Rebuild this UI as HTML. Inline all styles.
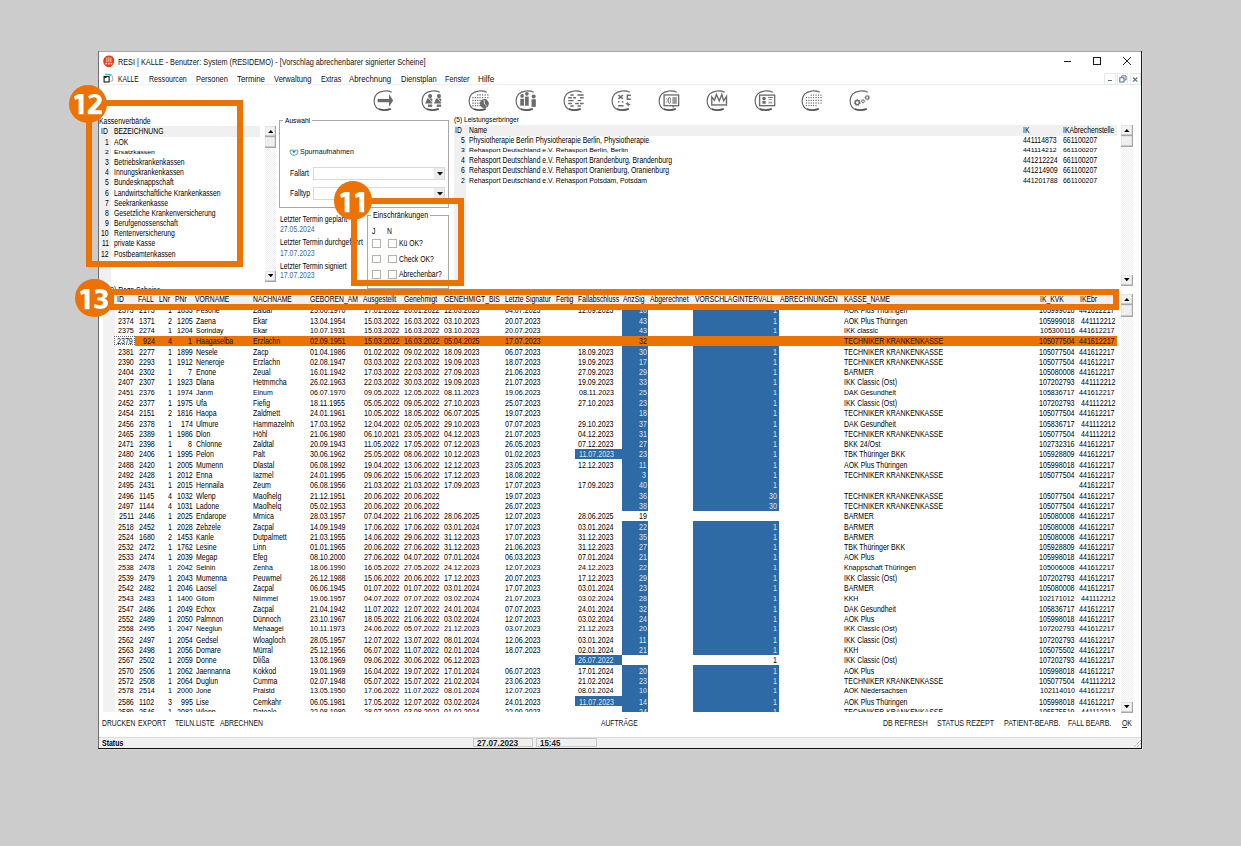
<!DOCTYPE html>
<html><head><meta charset="utf-8"><style>
html,body{margin:0;padding:0;}
body{width:1241px;height:846px;background:#cccccc;position:relative;overflow:hidden;font-family:"Liberation Sans",sans-serif;}
.a{position:absolute;}
.t{position:absolute;white-space:nowrap;transform-origin:0 50%;}
.clip{position:absolute;overflow:hidden;}
</style></head><body>
<div class="a" style="left:98.00px;top:51.00px;width:1044.00px;height:698.00px;background:#fff;"></div>
<div class="a" style="left:98.00px;top:51.00px;width:1044.00px;height:1.00px;background:#a9a7a9;"></div>
<div class="a" style="left:98.00px;top:51.00px;width:1.00px;height:698.00px;background:#6e6d70;"></div>
<div class="a" style="left:1141.00px;top:51.00px;width:1.00px;height:698.00px;background:#1e1e1e;"></div>
<div class="a" style="left:1142.00px;top:52.00px;width:1.00px;height:697.50px;background:#d8d8d8;"></div>
<div class="a" style="left:98.00px;top:747.70px;width:1044.00px;height:1.10px;background:#111;"></div>
<div class="a" style="left:98.00px;top:748.80px;width:1045.00px;height:0.80px;background:#d6d6d6;"></div>
<svg class="a" style="left:103px;top:54.5px" width="11.5" height="12.5" viewBox="0 0 11.5 12.5">
<path d="M5.7 0.4 C7.2 0.3 8.3 0.9 9.4 1.6 C10.6 2.6 11.2 3.9 11.2 5.4 C11.3 6.6 11 7.9 10.4 8.9 C9.6 10.3 8.6 11.4 7.3 12 C6.4 12.4 5.2 12.4 4.2 12 C2.6 11.3 1.4 10.1 0.7 8.6 C0.2 7.5 0.1 6.1 0.4 4.8 C0.8 3.1 1.8 1.7 3.3 0.9 C4 0.6 4.8 0.4 5.7 0.4 Z" fill="#e63f1c"/>
<rect x="3.2" y="2.6" width="1.2" height="4.6" fill="#f6b8a4"/><rect x="5.2" y="2.2" width="1.2" height="5" fill="#f6b8a4"/><rect x="7.2" y="2.6" width="1.2" height="4.6" fill="#f6b8a4"/>
<rect x="2.4" y="7.9" width="1.6" height="1.4" fill="#fff"/><rect x="4.9" y="8.1" width="1.8" height="1.2" fill="#fff"/><rect x="7.6" y="7.9" width="1.6" height="1.4" fill="#fff"/>
</svg>
<div class="t" style="left:117.60px;top:57.05px;font-size:9.5px;line-height:9.5px;transform:scaleX(0.7666);color:#111;">RESI | KALLE - Benutzer: System (RESIDEMO) - [Vorschlag abrechenbarer signierter Scheine]</div>
<div class="a" style="left:1064.00px;top:61.00px;width:7.00px;height:1.00px;background:#222;"></div>
<div class="a" style="left:1093.00px;top:57.00px;width:7.50px;height:8.00px;box-shadow:inset 0 0 0 1.05px #1a1a1a;"></div>
<svg class="a" style="left:1122px;top:56px" width="10" height="10" viewBox="0 0 10 10"><path d="M1 1 L9 9 M9 1 L1 9" stroke="#222" stroke-width="0.95"/></svg>
<svg class="a" style="left:102.5px;top:73px" width="11" height="10" viewBox="0 0 11 10">
<rect x="1.1" y="3.4" width="5" height="5.6" fill="none" stroke="#1a1a1a" stroke-width="1.1"/>
<path d="M1.1 4.6 H3.2 L3.8 3.6" stroke="#1a1a1a" stroke-width="1" fill="none"/>
<path d="M2.3 1.1 L8.6 1.8" stroke="#35b0d8" stroke-width="1.1"/>
<path d="M6.3 2.6 L9.4 2.9 L9.9 7.9 L6.3 8.4" stroke="#9a9a9a" stroke-width="0.8" fill="none"/>
</svg>
<div class="t" style="left:118.00px;top:74.20px;font-size:9.8px;line-height:9.8px;transform:scaleX(0.6817);color:#111;">KALLE</div>
<div class="t" style="left:148.60px;top:74.20px;font-size:9.8px;line-height:9.8px;transform:scaleX(0.7228);color:#111;">Ressourcen</div>
<div class="t" style="left:195.80px;top:74.20px;font-size:9.8px;line-height:9.8px;transform:scaleX(0.7580);color:#111;">Personen</div>
<div class="t" style="left:236.60px;top:74.20px;font-size:9.8px;line-height:9.8px;transform:scaleX(0.8033);color:#111;">Termine</div>
<div class="t" style="left:273.50px;top:74.20px;font-size:9.8px;line-height:9.8px;transform:scaleX(0.7734);color:#111;">Verwaltung</div>
<div class="t" style="left:320.60px;top:74.20px;font-size:9.8px;line-height:9.8px;transform:scaleX(0.7273);color:#111;">Extras</div>
<div class="t" style="left:349.20px;top:74.20px;font-size:9.8px;line-height:9.8px;transform:scaleX(0.7984);color:#111;">Abrechnung</div>
<div class="t" style="left:400.80px;top:74.20px;font-size:9.8px;line-height:9.8px;transform:scaleX(0.7688);color:#111;">Dienstplan</div>
<div class="t" style="left:445.40px;top:74.20px;font-size:9.8px;line-height:9.8px;transform:scaleX(0.7344);color:#111;">Fenster</div>
<div class="t" style="left:478.40px;top:74.20px;font-size:9.8px;line-height:9.8px;transform:scaleX(0.8314);color:#111;">Hilfe</div>
<div class="a" style="left:99.00px;top:83.50px;width:1042.00px;height:1.00px;background:#eeeeee;"></div>
<div class="a" style="left:1104.00px;top:73.00px;width:11.50px;height:12.00px;box-shadow:inset 0 0 0 1px #e8e8e8;"></div>
<div class="a" style="left:1117.00px;top:73.00px;width:11.00px;height:12.00px;box-shadow:inset 0 0 0 1px #e8e8e8;"></div>
<div class="a" style="left:1129.50px;top:73.00px;width:11.00px;height:12.00px;box-shadow:inset 0 0 0 1px #e8e8e8;"></div>
<div class="a" style="left:1107.50px;top:79.80px;width:4.00px;height:1.40px;background:#4f6d8c;"></div>
<svg class="a" style="left:1119px;top:75px" width="8" height="8" viewBox="0 0 8 8"><rect x="0.8" y="2.8" width="4.2" height="4.2" fill="none" stroke="#56728f" stroke-width="1"/><path d="M2.8 2.8 V0.8 H7 V5 H5" fill="none" stroke="#56728f" stroke-width="1"/></svg>
<svg class="a" style="left:1131px;top:75px" width="8" height="8" viewBox="0 0 8 8"><path d="M2 2.5 L6.3 6.6 M6.3 2.5 L2 6.6" stroke="#5a7590" stroke-width="1.3"/></svg>
<svg class="a" style="left:370px;top:86.5px" width="28" height="28" viewBox="0 0 846 846"><path d="M655 160 C570 110 480 118 410 122 C230 135 122 260 125 415 C128 560 205 655 300 680" fill="none" stroke="#666" stroke-width="36"/><path d="M268 666 Q445 730 628 662" fill="none" stroke="#555" stroke-width="56"/><rect x="230" y="360" width="350" height="100" fill="#6b6b6b"/><path d="M575 210 L700 410 L575 600 Z" fill="#6b6b6b"/></svg>
<svg class="a" style="left:418px;top:86.5px" width="28" height="28" viewBox="0 0 846 846"><path d="M655 160 C570 110 480 118 410 122 C230 135 122 260 125 415 C128 560 205 655 300 680" fill="none" stroke="#666" stroke-width="36"/><path d="M268 666 Q445 730 628 662" fill="none" stroke="#555" stroke-width="56"/><circle cx="365" cy="275" r="62" fill="#6b6b6b"/><path d="M280 350 H430 V500 H215 Z" fill="#6b6b6b"/><path d="M335 350 L430 470" stroke="#fff" stroke-width="22"/><rect x="300" y="530" width="130" height="70" fill="#6b6b6b"/><circle cx="633" cy="275" r="62" fill="#6b6b6b"/><path d="M548 350 H698 V500 H483 Z" fill="#6b6b6b"/><path d="M603 350 L698 470" stroke="#fff" stroke-width="22"/><rect x="568" y="530" width="130" height="70" fill="#6b6b6b"/></svg>
<svg class="a" style="left:465px;top:86.5px" width="28" height="28" viewBox="0 0 846 846"><path d="M655 160 C570 110 480 118 410 122 C230 135 122 260 125 415 C128 560 205 655 300 680" fill="none" stroke="#666" stroke-width="36"/><path d="M268 666 Q445 730 628 662" fill="none" stroke="#555" stroke-width="56"/><rect x="366.0" y="221.0" width="38" height="38" fill="#707070"/><rect x="436.0" y="221.0" width="38" height="38" fill="#707070"/><rect x="511.0" y="221.0" width="38" height="38" fill="#707070"/><rect x="591.0" y="221.0" width="38" height="38" fill="#707070"/><rect x="671.0" y="221.0" width="38" height="38" fill="#707070"/><rect x="221.0" y="301.0" width="38" height="38" fill="#707070"/><rect x="296.0" y="301.0" width="38" height="38" fill="#707070"/><rect x="366.0" y="301.0" width="38" height="38" fill="#707070"/><rect x="436.0" y="301.0" width="38" height="38" fill="#707070"/><rect x="511.0" y="301.0" width="38" height="38" fill="#707070"/><rect x="591.0" y="301.0" width="38" height="38" fill="#707070"/><rect x="671.0" y="301.0" width="38" height="38" fill="#707070"/><rect x="221.0" y="386.0" width="38" height="38" fill="#707070"/><rect x="296.0" y="386.0" width="38" height="38" fill="#707070"/><rect x="366.0" y="386.0" width="38" height="38" fill="#707070"/><rect x="436.0" y="386.0" width="38" height="38" fill="#707070"/><rect x="221.0" y="471.0" width="38" height="38" fill="#707070"/><rect x="296.0" y="471.0" width="38" height="38" fill="#707070"/><rect x="366.0" y="471.0" width="38" height="38" fill="#707070"/><rect x="436.0" y="471.0" width="38" height="38" fill="#707070"/><rect x="221.0" y="546.0" width="38" height="38" fill="#707070"/><rect x="296.0" y="546.0" width="38" height="38" fill="#707070"/><rect x="366.0" y="546.0" width="38" height="38" fill="#707070"/><rect x="436.0" y="546.0" width="38" height="38" fill="#707070"/><circle cx="585" cy="500" r="135" fill="#6b6b6b"/><path d="M572 395 L590 515 L655 575" stroke="#fff" stroke-width="26" fill="none"/></svg>
<svg class="a" style="left:512px;top:86.5px" width="28" height="28" viewBox="0 0 846 846"><path d="M655 160 C570 110 480 118 410 122 C230 135 122 260 125 415 C128 560 205 655 300 680" fill="none" stroke="#666" stroke-width="36"/><path d="M268 666 Q445 730 628 662" fill="none" stroke="#555" stroke-width="56"/><circle cx="305" cy="270" r="56" fill="#6b6b6b"/><rect x="250" y="355" width="110" height="210" fill="#6b6b6b"/><circle cx="450" cy="205" r="56" fill="#6b6b6b"/><rect x="395" y="290" width="110" height="275" fill="#6b6b6b"/><circle cx="655" cy="285" r="60" fill="#6b6b6b"/><rect x="590" y="370" width="130" height="230" fill="#6b6b6b"/></svg>
<svg class="a" style="left:560px;top:86.5px" width="28" height="28" viewBox="0 0 846 846"><path d="M655 160 C570 110 480 118 410 122 C230 135 122 260 125 415 C128 560 205 655 300 680" fill="none" stroke="#666" stroke-width="36"/><path d="M268 666 Q445 730 628 662" fill="none" stroke="#555" stroke-width="56"/><rect x="310" y="222.5" width="105" height="45" rx="12" fill="#6b6b6b"/><rect x="525" y="222.5" width="190" height="45" rx="12" fill="#6b6b6b"/><rect x="245" y="300.0" width="115" height="50" rx="12" fill="#6b6b6b"/><rect x="395" y="300.0" width="90" height="50" rx="12" fill="#6b6b6b"/><rect x="605" y="300.0" width="110" height="50" rx="12" fill="#6b6b6b"/><rect x="245" y="392.5" width="170" height="35" rx="12" fill="#6b6b6b"/><rect x="525" y="392.5" width="115" height="35" rx="12" fill="#6b6b6b"/><rect x="245" y="472.5" width="115" height="45" rx="12" fill="#6b6b6b"/><rect x="455" y="472.5" width="115" height="45" rx="12" fill="#6b6b6b"/><rect x="605" y="472.5" width="110" height="45" rx="12" fill="#6b6b6b"/><rect x="310" y="555.0" width="105" height="40" rx="12" fill="#6b6b6b"/><rect x="525" y="555.0" width="110" height="40" rx="12" fill="#6b6b6b"/></svg>
<svg class="a" style="left:608px;top:86.5px" width="28" height="28" viewBox="0 0 846 846"><path d="M655 160 C570 110 480 118 410 122 C230 135 122 260 125 415 C128 560 205 655 300 680" fill="none" stroke="#666" stroke-width="36"/><path d="M268 666 Q445 730 628 662" fill="none" stroke="#555" stroke-width="56"/><path d="M315 240 L450 360 M450 240 L315 360" stroke="#6b6b6b" stroke-width="45"/><path d="M690 250 H585 V370 H690" stroke="#6b6b6b" stroke-width="45" fill="none"/><rect x="300" y="425" width="45" height="45" fill="#6b6b6b"/><rect x="420" y="425" width="45" height="45" fill="#6b6b6b"/><rect x="305" y="545" width="165" height="45" fill="#6b6b6b"/><path d="M585 430 L618 492 L690 525 L628 548 L612 600 L588 548 L525 500 L582 478 Z" fill="#6b6b6b"/></svg>
<svg class="a" style="left:655px;top:86.5px" width="28" height="28" viewBox="0 0 846 846"><path d="M655 160 C570 110 480 118 410 122 C230 135 122 260 125 415 C128 560 205 655 300 680" fill="none" stroke="#666" stroke-width="36"/><path d="M268 666 Q445 730 628 662" fill="none" stroke="#555" stroke-width="56"/><rect x="275" y="240" width="440" height="325" fill="none" stroke="#6b6b6b" stroke-width="40"/><path d="M515 560 L540 635 L600 560 Z" fill="#6b6b6b"/><ellipse cx="435" cy="405" rx="32" ry="98" fill="none" stroke="#6b6b6b" stroke-width="26"/><path d="M340 335 L385 405 L340 475" stroke="#888" stroke-width="24" fill="none"/><rect x="525" y="305" width="135" height="205" fill="#9a9a9a"/></svg>
<svg class="a" style="left:703px;top:86.5px" width="28" height="28" viewBox="0 0 846 846"><path d="M655 160 C570 110 480 118 410 122 C230 135 122 260 125 415 C128 560 205 655 300 680" fill="none" stroke="#666" stroke-width="36"/><path d="M268 666 Q445 730 628 662" fill="none" stroke="#555" stroke-width="56"/><path d="M265 545 L265 300 L345 400 L405 225 L490 420 L570 225 L625 420 L710 285 L710 545 Z" stroke="#6b6b6b" stroke-width="42" fill="none" stroke-linejoin="miter"/><rect x="250" y="560" width="460" height="18" fill="#bbb"/></svg>
<svg class="a" style="left:751px;top:86.5px" width="28" height="28" viewBox="0 0 846 846"><path d="M655 160 C570 110 480 118 410 122 C230 135 122 260 125 415 C128 560 205 655 300 680" fill="none" stroke="#666" stroke-width="36"/><path d="M268 666 Q445 730 628 662" fill="none" stroke="#555" stroke-width="56"/><rect x="260" y="245" width="455" height="320" fill="none" stroke="#6b6b6b" stroke-width="40"/><circle cx="395" cy="350" r="55" fill="#6b6b6b"/><rect x="345" y="425" width="100" height="80" fill="#6b6b6b"/><rect x="515" y="300" width="145" height="30" fill="#6b6b6b"/><rect x="525" y="365" width="120" height="30" fill="#999"/><rect x="525" y="445" width="120" height="35" fill="#999"/><rect x="520" y="495" width="135" height="20" fill="#bbb"/></svg>
<svg class="a" style="left:798px;top:86.5px" width="28" height="28" viewBox="0 0 846 846"><path d="M655 160 C570 110 480 118 410 122 C230 135 122 260 125 415 C128 560 205 655 300 680" fill="none" stroke="#666" stroke-width="36"/><path d="M268 666 Q445 730 628 662" fill="none" stroke="#555" stroke-width="56"/><rect x="382.0" y="227.0" width="36" height="36" fill="#6e6e6e"/><rect x="452.0" y="227.0" width="36" height="36" fill="#6e6e6e"/><rect x="527.0" y="227.0" width="36" height="36" fill="#6e6e6e"/><rect x="602.0" y="227.0" width="36" height="36" fill="#6e6e6e"/><rect x="677.0" y="227.0" width="36" height="36" fill="#6e6e6e"/><rect x="237.0" y="302.0" width="36" height="36" fill="#6e6e6e"/><rect x="312.0" y="302.0" width="36" height="36" fill="#6e6e6e"/><rect x="382.0" y="302.0" width="36" height="36" fill="#6e6e6e"/><rect x="452.0" y="302.0" width="36" height="36" fill="#6e6e6e"/><rect x="527.0" y="302.0" width="36" height="36" fill="#6e6e6e"/><rect x="602.0" y="302.0" width="36" height="36" fill="#6e6e6e"/><rect x="677.0" y="302.0" width="36" height="36" fill="#6e6e6e"/><rect x="237.0" y="387.0" width="36" height="36" fill="#6e6e6e"/><rect x="312.0" y="387.0" width="36" height="36" fill="#6e6e6e"/><rect x="382.0" y="387.0" width="36" height="36" fill="#6e6e6e"/><rect x="452.0" y="387.0" width="36" height="36" fill="#6e6e6e"/><rect x="527.0" y="387.0" width="36" height="36" fill="#6e6e6e"/><rect x="602.0" y="387.0" width="36" height="36" fill="#6e6e6e"/><rect x="677.0" y="387.0" width="36" height="36" fill="#6e6e6e"/><rect x="237.0" y="467.0" width="36" height="36" fill="#6e6e6e"/><rect x="312.0" y="467.0" width="36" height="36" fill="#6e6e6e"/><rect x="382.0" y="467.0" width="36" height="36" fill="#6e6e6e"/><rect x="452.0" y="467.0" width="36" height="36" fill="#6e6e6e"/><rect x="527.0" y="467.0" width="36" height="36" fill="#6e6e6e"/><rect x="602.0" y="467.0" width="36" height="36" fill="#6e6e6e"/><rect x="677.0" y="467.0" width="36" height="36" fill="#6e6e6e"/><rect x="237.0" y="542.0" width="36" height="36" fill="#6e6e6e"/><rect x="312.0" y="542.0" width="36" height="36" fill="#6e6e6e"/><rect x="382.0" y="542.0" width="36" height="36" fill="#6e6e6e"/><rect x="452.0" y="542.0" width="36" height="36" fill="#6e6e6e"/><rect x="527.0" y="542.0" width="36" height="36" fill="#6e6e6e"/></svg>
<svg class="a" style="left:846px;top:86.5px" width="28" height="28" viewBox="0 0 846 846"><path d="M655 160 C570 110 480 118 410 122 C230 135 122 260 125 415 C128 560 205 655 300 680" fill="none" stroke="#666" stroke-width="36"/><path d="M268 666 Q445 730 628 662" fill="none" stroke="#555" stroke-width="56"/><circle cx="340" cy="470" r="62.0" fill="none" stroke="#6b6b6b" stroke-width="42.0"/><circle cx="340" cy="470" r="92.0" fill="none" stroke="#6b6b6b" stroke-width="30.0" stroke-dasharray="42.0 38.0"/><circle cx="515" cy="430" r="38.44" fill="none" stroke="#6b6b6b" stroke-width="26.04"/><circle cx="515" cy="430" r="57.04" fill="none" stroke="#6b6b6b" stroke-width="18.599999999999998" stroke-dasharray="26.04 23.56"/><circle cx="640" cy="320" r="48.36" fill="none" stroke="#6b6b6b" stroke-width="32.76"/><circle cx="640" cy="320" r="71.76" fill="none" stroke="#6b6b6b" stroke-width="23.4" stroke-dasharray="32.76 29.64"/></svg>
<div class="t" style="left:99.20px;top:117.05px;font-size:8.3px;line-height:8.3px;transform:scaleX(0.8300);">Kassenverbände</div>
<div class="a" style="left:99.00px;top:126.00px;width:161.00px;height:11.00px;background:#f0f0f0;"></div>
<div class="a" style="left:99.00px;top:137.00px;width:12.00px;height:144.50px;background:#f0f0f0;"></div>
<div class="t" style="left:100.80px;top:127.70px;font-size:8.2px;line-height:8.2px;transform:scaleX(0.8300);">ID</div>
<div class="t" style="left:113.70px;top:127.70px;font-size:8.2px;line-height:8.2px;transform:scaleX(0.8300);">BEZEICHNUNG</div>
<div class="t" style="left:105.01px;top:138.80px;font-size:8.2px;line-height:8.2px;transform:scaleX(0.8300);">1</div>
<div class="t" style="left:113.50px;top:138.80px;font-size:8.2px;line-height:8.2px;transform:scaleX(0.8300);">AOK</div>
<div class="t" style="left:105.01px;top:148.96px;font-size:8.2px;line-height:8.2px;transform:scale(0.8300,0.6);">2</div>
<div class="t" style="left:113.50px;top:148.96px;font-size:8.2px;line-height:8.2px;transform:scale(0.8300,0.6);">Ersatzkassen</div>
<div class="t" style="left:105.01px;top:159.12px;font-size:8.2px;line-height:8.2px;transform:scaleX(0.8300);">3</div>
<div class="t" style="left:113.50px;top:159.12px;font-size:8.2px;line-height:8.2px;transform:scaleX(0.8300);">Betriebskrankenkassen</div>
<div class="t" style="left:105.01px;top:169.28px;font-size:8.2px;line-height:8.2px;transform:scaleX(0.8300);">4</div>
<div class="t" style="left:113.50px;top:169.28px;font-size:8.2px;line-height:8.2px;transform:scaleX(0.8300);">Innungskrankenkassen</div>
<div class="t" style="left:105.01px;top:179.44px;font-size:8.2px;line-height:8.2px;transform:scaleX(0.8300);">5</div>
<div class="t" style="left:113.50px;top:179.44px;font-size:8.2px;line-height:8.2px;transform:scaleX(0.8300);">Bundesknappschaft</div>
<div class="t" style="left:105.01px;top:189.60px;font-size:8.2px;line-height:8.2px;transform:scaleX(0.8300);">6</div>
<div class="t" style="left:113.50px;top:189.60px;font-size:8.2px;line-height:8.2px;transform:scaleX(0.8300);">Landwirtschaftliche Krankenkassen</div>
<div class="t" style="left:105.01px;top:199.76px;font-size:8.2px;line-height:8.2px;transform:scaleX(0.8300);">7</div>
<div class="t" style="left:113.50px;top:199.76px;font-size:8.2px;line-height:8.2px;transform:scaleX(0.8300);">Seekrankenkasse</div>
<div class="t" style="left:105.01px;top:209.92px;font-size:8.2px;line-height:8.2px;transform:scaleX(0.8300);">8</div>
<div class="t" style="left:113.50px;top:209.92px;font-size:8.2px;line-height:8.2px;transform:scaleX(0.8300);">Gesetzliche Krankenversicherung</div>
<div class="t" style="left:105.01px;top:220.08px;font-size:8.2px;line-height:8.2px;transform:scaleX(0.8300);">9</div>
<div class="t" style="left:113.50px;top:220.08px;font-size:8.2px;line-height:8.2px;transform:scaleX(0.8300);">Berufgenossenschaft</div>
<div class="t" style="left:101.23px;top:230.24px;font-size:8.2px;line-height:8.2px;transform:scaleX(0.8300);">10</div>
<div class="t" style="left:113.50px;top:230.24px;font-size:8.2px;line-height:8.2px;transform:scaleX(0.8300);">Rentenversicherung</div>
<div class="t" style="left:101.73px;top:240.40px;font-size:8.2px;line-height:8.2px;transform:scaleX(0.8300);">11</div>
<div class="t" style="left:113.50px;top:240.40px;font-size:8.2px;line-height:8.2px;transform:scaleX(0.8300);">private Kasse</div>
<div class="t" style="left:101.23px;top:250.56px;font-size:8.2px;line-height:8.2px;transform:scaleX(0.8300);">12</div>
<div class="t" style="left:113.50px;top:250.56px;font-size:8.2px;line-height:8.2px;transform:scaleX(0.8300);">Postbeamtenkassen</div>
<div class="a" style="left:265.00px;top:126.00px;width:11.00px;height:155.50px;background:repeating-conic-gradient(#f0f0f0 0 25%,#fdfdfd 0 50%) 0 0/2px 2px;"></div>
<div class="a" style="left:265.00px;top:126.00px;width:11.00px;height:11.00px;background:#f1f1f1;box-shadow:inset -1.2px -1.6px 0 #a6a6a6, inset 1px 1px 0 #e4e4e4;"></div>
<svg class="a" style="left:267.5px;top:129.6px" width="5.6" height="3.2" viewBox="0 0 5.6 3.2"><path d="M0 3.2 L2.8 0 L5.6 3.2 Z" fill="#000"/></svg>
<div class="a" style="left:265.00px;top:137.00px;width:11.00px;height:11.00px;background:#efefef;box-shadow:inset -1.2px -1.6px 0 #a6a6a6, inset 1px 1px 0 #e4e4e4;"></div>
<div class="a" style="left:265.00px;top:270.50px;width:11.00px;height:11.00px;background:#f1f1f1;box-shadow:inset -1.2px -1.6px 0 #a6a6a6, inset 1px 1px 0 #e4e4e4;"></div>
<svg class="a" style="left:267.5px;top:274.3px" width="5.6" height="3.2" viewBox="0 0 5.6 3.2"><path d="M0 0 L2.8 3.2 L5.6 0 Z" fill="#000"/></svg>
<div class="a" style="left:279.00px;top:120.00px;width:170.00px;height:88.00px;box-shadow:inset 0 0 0 1px #a8a8a8;"></div>
<div class="a" style="left:283.00px;top:117.00px;width:29.10px;height:6.00px;background:#fff;"></div>
<div class="t" style="left:285.00px;top:116.60px;font-size:8px;line-height:8px;transform:scaleX(0.8300);">Auswahl</div>
<svg class="a" style="left:288.5px;top:148.5px" width="10" height="7" viewBox="0 0 10 7"><path d="M1 1.2 Q1 6.3 5 6.3 Q9 6.3 9 1.2 Z" fill="#eef6fb" stroke="#5f9fcc" stroke-width="1"/><path d="M3.3 2 L6.7 2 L5 4.3 Z" fill="#1f9a3a"/></svg>
<div class="t" style="left:300.40px;top:147.70px;font-size:8.2px;line-height:8.2px;transform:scaleX(0.8150);color:#111;transform:scale(0.8583,0.8);">Spurnaufnahmen</div>
<div class="t" style="left:290.00px;top:170.20px;font-size:8.2px;line-height:8.2px;transform:scaleX(0.8300);">Fallart</div>
<div class="t" style="left:290.00px;top:190.30px;font-size:8.2px;line-height:8.2px;transform:scaleX(0.8300);">Falltyp</div>
<div class="a" style="left:313.00px;top:166.50px;width:132.00px;height:13.20px;box-shadow:inset 0 0 0 1px #d9d9d9;"></div>
<div class="a" style="left:434.00px;top:167.50px;width:10.00px;height:11.20px;background:#ececec;"></div>
<svg class="a" style="left:436.5px;top:171.6px" width="6" height="4" viewBox="0 0 6 4"><path d="M0 0 L3 3.5 L6 0 Z" fill="#111"/></svg>
<div class="a" style="left:313.00px;top:187.40px;width:132.00px;height:12.90px;box-shadow:inset 0 0 0 1px #d9d9d9;"></div>
<div class="a" style="left:434.00px;top:188.40px;width:10.00px;height:10.90px;background:#ececec;"></div>
<svg class="a" style="left:436.5px;top:192.4px" width="6" height="4" viewBox="0 0 6 4"><path d="M0 0 L3 3.5 L6 0 Z" fill="#111"/></svg>
<div class="t" style="left:280.00px;top:215.90px;font-size:8.2px;line-height:8.2px;transform:scaleX(0.8300);">Letzter Termin geplant</div>
<div class="t" style="left:280.00px;top:239.20px;font-size:8.2px;line-height:8.2px;transform:scaleX(0.8300);">Letzter Termin durchgeführt</div>
<div class="t" style="left:280.00px;top:262.50px;font-size:8.2px;line-height:8.2px;transform:scaleX(0.8300);">Letzter Termin signiert</div>
<div class="t" style="left:280.00px;top:226.30px;font-size:8.2px;line-height:8.2px;transform:scaleX(0.8450);color:#3a6db0;">27.05.2024</div>
<div class="t" style="left:280.00px;top:249.50px;font-size:8.2px;line-height:8.2px;transform:scaleX(0.8450);color:#3a6db0;">17.07.2023</div>
<div class="t" style="left:280.00px;top:272.30px;font-size:8.2px;line-height:8.2px;transform:scaleX(0.8450);color:#3a6db0;">17.07.2023</div>
<div class="a" style="left:367.00px;top:215.00px;width:82.00px;height:74.00px;box-shadow:inset 0 0 0 1px #a8a8a8;"></div>
<div class="a" style="left:370.90px;top:212.00px;width:59.16px;height:6.00px;background:#fff;"></div>
<div class="t" style="left:372.90px;top:211.30px;font-size:8.6px;line-height:8.6px;transform:scaleX(0.8300);">Einschränkungen</div>
<div class="t" style="left:372.40px;top:227.90px;font-size:8.2px;line-height:8.2px;transform:scaleX(0.8300);">J</div>
<div class="t" style="left:387.40px;top:227.90px;font-size:8.2px;line-height:8.2px;transform:scaleX(0.8300);">N</div>
<div class="a" style="left:372.00px;top:239.20px;width:9.00px;height:8.60px;box-shadow:inset 0 0 0 1px #b4b4a8;"></div>
<div class="a" style="left:388.00px;top:239.20px;width:8.50px;height:8.60px;box-shadow:inset 0 0 0 1px #b4b4a8;"></div>
<div class="t" style="left:398.70px;top:240.00px;font-size:8.2px;line-height:8.2px;transform:scaleX(0.8300);">Kü OK?</div>
<div class="a" style="left:372.00px;top:254.90px;width:9.00px;height:8.60px;box-shadow:inset 0 0 0 1px #b4b4a8;"></div>
<div class="a" style="left:388.00px;top:254.90px;width:8.50px;height:8.60px;box-shadow:inset 0 0 0 1px #b4b4a8;"></div>
<div class="t" style="left:398.70px;top:255.70px;font-size:8.2px;line-height:8.2px;transform:scaleX(0.8300);">Check OK?</div>
<div class="a" style="left:372.00px;top:270.20px;width:9.00px;height:8.60px;box-shadow:inset 0 0 0 1px #b4b4a8;"></div>
<div class="a" style="left:388.00px;top:270.20px;width:8.50px;height:8.60px;box-shadow:inset 0 0 0 1px #b4b4a8;"></div>
<div class="t" style="left:398.70px;top:271.00px;font-size:8.2px;line-height:8.2px;transform:scaleX(0.8300);">Abrechenbar?</div>
<div class="t" style="left:454.40px;top:115.80px;font-size:8px;line-height:8px;transform:scaleX(0.8300);">(5) Leistungserbringer</div>
<div class="a" style="left:454.00px;top:125.00px;width:663.00px;height:10.50px;background:#f0f0f0;"></div>
<div class="a" style="left:454.00px;top:135.50px;width:12.00px;height:150.50px;background:#f0f0f0;"></div>
<div class="t" style="left:454.60px;top:126.90px;font-size:8.2px;line-height:8.2px;transform:scaleX(0.8300);">ID</div>
<div class="t" style="left:469.10px;top:126.90px;font-size:8.2px;line-height:8.2px;transform:scaleX(0.8300);">Name</div>
<div class="t" style="left:1022.70px;top:126.90px;font-size:8.2px;line-height:8.2px;transform:scaleX(0.8300);">IK</div>
<div class="t" style="left:1062.70px;top:126.90px;font-size:8.2px;line-height:8.2px;transform:scaleX(0.8300);">IKAbrechenstelle</div>
<div class="t" style="left:461.41px;top:137.30px;font-size:8.2px;line-height:8.2px;transform:scaleX(0.8300);">5</div>
<div class="t" style="left:469.10px;top:137.30px;font-size:8.2px;line-height:8.2px;transform:scaleX(0.8350);">Physiotherapie Berlin Physiotherapie Berlin, Physiotherapie</div>
<div class="t" style="left:1022.70px;top:137.30px;font-size:8.2px;line-height:8.2px;transform:scaleX(0.8450);">441114873</div>
<div class="t" style="left:1062.70px;top:137.30px;font-size:8.2px;line-height:8.2px;transform:scaleX(0.8450);">661100207</div>
<div class="t" style="left:461.41px;top:147.25px;font-size:8.2px;line-height:8.2px;transform:scale(0.8300,0.6);">3</div>
<div class="t" style="left:469.10px;top:147.25px;font-size:8.2px;line-height:8.2px;transform:scale(0.8350,0.6);">Rehasport Deutschland e.V. Rehasport Berlin, Berlin</div>
<div class="t" style="left:1022.70px;top:147.25px;font-size:8.2px;line-height:8.2px;transform:scale(0.8450,0.6);">441114212</div>
<div class="t" style="left:1062.70px;top:147.25px;font-size:8.2px;line-height:8.2px;transform:scale(0.8450,0.6);">661100207</div>
<div class="t" style="left:461.41px;top:157.20px;font-size:8.2px;line-height:8.2px;transform:scaleX(0.8300);">4</div>
<div class="t" style="left:469.10px;top:157.20px;font-size:8.2px;line-height:8.2px;transform:scaleX(0.8350);">Rehasport Deutschland e.V. Rehasport Brandenburg, Brandenburg</div>
<div class="t" style="left:1022.70px;top:157.20px;font-size:8.2px;line-height:8.2px;transform:scaleX(0.8450);">441212224</div>
<div class="t" style="left:1062.70px;top:157.20px;font-size:8.2px;line-height:8.2px;transform:scaleX(0.8450);">661100207</div>
<div class="t" style="left:461.41px;top:167.15px;font-size:8.2px;line-height:8.2px;transform:scaleX(0.8300);">6</div>
<div class="t" style="left:469.10px;top:167.15px;font-size:8.2px;line-height:8.2px;transform:scaleX(0.8350);">Rehasport Deutschland e.V. Rehasport Oranienburg, Oranienburg</div>
<div class="t" style="left:1022.70px;top:167.15px;font-size:8.2px;line-height:8.2px;transform:scaleX(0.8450);">441214909</div>
<div class="t" style="left:1062.70px;top:167.15px;font-size:8.2px;line-height:8.2px;transform:scaleX(0.8450);">661100207</div>
<div class="t" style="left:461.41px;top:177.10px;font-size:8.2px;line-height:8.2px;transform:scale(0.8300,0.85);">2</div>
<div class="t" style="left:469.10px;top:177.10px;font-size:8.2px;line-height:8.2px;transform:scale(0.8350,0.85);">Rehasport Deutschland e.V. Rehasport Potsdam, Potsdam</div>
<div class="t" style="left:1022.70px;top:177.10px;font-size:8.2px;line-height:8.2px;transform:scale(0.8450,0.85);">441201788</div>
<div class="t" style="left:1062.70px;top:177.10px;font-size:8.2px;line-height:8.2px;transform:scale(0.8450,0.85);">661100207</div>
<div class="a" style="left:1121.30px;top:125.00px;width:11.40px;height:160.60px;background:repeating-conic-gradient(#f0f0f0 0 25%,#fdfdfd 0 50%) 0 0/2px 2px;"></div>
<div class="a" style="left:1121.30px;top:125.00px;width:11.40px;height:11.00px;background:#f1f1f1;box-shadow:inset -1.2px -1.6px 0 #a6a6a6, inset 1px 1px 0 #e4e4e4;"></div>
<svg class="a" style="left:1124.0px;top:128.6px" width="5.6" height="3.2" viewBox="0 0 5.6 3.2"><path d="M0 3.2 L2.8 0 L5.6 3.2 Z" fill="#000"/></svg>
<div class="a" style="left:1121.30px;top:136.00px;width:11.40px;height:11.00px;background:#efefef;box-shadow:inset -1.2px -1.6px 0 #a6a6a6, inset 1px 1px 0 #e4e4e4;"></div>
<div class="a" style="left:1121.30px;top:274.60px;width:11.40px;height:11.00px;background:#f1f1f1;box-shadow:inset -1.2px -1.6px 0 #a6a6a6, inset 1px 1px 0 #e4e4e4;"></div>
<svg class="a" style="left:1124.0px;top:278.4px" width="5.6" height="3.2" viewBox="0 0 5.6 3.2"><path d="M0 0 L2.8 3.2 L5.6 0 Z" fill="#000"/></svg>
<div class="t" style="left:108.00px;top:286.50px;font-size:8.2px;line-height:8.2px;transform:scaleX(0.8300);">(9) Rezp.Scheine</div>
<div class="a" style="left:103.30px;top:304.00px;width:11.40px;height:408.00px;background:#f2f2f2;"></div>
<div class="a" style="left:114.00px;top:295.00px;width:1003.00px;height:9.50px;background:#f0f0f0;"></div>
<div class="t" style="left:116.80px;top:296.00px;font-size:8.2px;line-height:8.2px;transform:scaleX(0.8300);">ID</div>
<div class="t" style="left:138.00px;top:296.00px;font-size:8.2px;line-height:8.2px;transform:scaleX(0.8300);">FALL</div>
<div class="t" style="left:158.70px;top:296.00px;font-size:8.2px;line-height:8.2px;transform:scaleX(0.8300);">LNr</div>
<div class="t" style="left:174.80px;top:296.00px;font-size:8.2px;line-height:8.2px;transform:scaleX(0.8300);">PNr</div>
<div class="t" style="left:195.40px;top:296.00px;font-size:8.2px;line-height:8.2px;transform:scaleX(0.8300);">VORNAME</div>
<div class="t" style="left:252.80px;top:296.00px;font-size:8.2px;line-height:8.2px;transform:scaleX(0.8300);">NACHNAME</div>
<div class="t" style="left:310.00px;top:296.00px;font-size:8.2px;line-height:8.2px;transform:scaleX(0.8300);">GEBOREN_AM</div>
<div class="t" style="left:363.20px;top:296.00px;font-size:8.2px;line-height:8.2px;transform:scaleX(0.8300);">Ausgestellt</div>
<div class="t" style="left:403.90px;top:296.00px;font-size:8.2px;line-height:8.2px;transform:scaleX(0.8300);">Genehmigt</div>
<div class="t" style="left:443.80px;top:296.00px;font-size:8.2px;line-height:8.2px;transform:scaleX(0.8300);">GENEHMIGT_BIS</div>
<div class="t" style="left:504.70px;top:296.00px;font-size:8.2px;line-height:8.2px;transform:scaleX(0.8300);">Letzte Signatur</div>
<div class="t" style="left:555.80px;top:296.00px;font-size:8.2px;line-height:8.2px;transform:scaleX(0.8300);">Fertig</div>
<div class="t" style="left:577.70px;top:296.00px;font-size:8.2px;line-height:8.2px;transform:scaleX(0.8300);">Fallabschluss</div>
<div class="t" style="left:623.20px;top:296.00px;font-size:8.2px;line-height:8.2px;transform:scaleX(0.8300);">AnzSig</div>
<div class="t" style="left:650.00px;top:296.00px;font-size:8.2px;line-height:8.2px;transform:scaleX(0.8300);">Abgerechnet</div>
<div class="t" style="left:694.50px;top:296.00px;font-size:8.2px;line-height:8.2px;transform:scaleX(0.8300);">VORSCHLAGINTERVALL</div>
<div class="t" style="left:780.30px;top:296.00px;font-size:8.2px;line-height:8.2px;transform:scaleX(0.8300);">ABRECHNUNGEN</div>
<div class="t" style="left:843.90px;top:296.00px;font-size:8.2px;line-height:8.2px;transform:scaleX(0.8300);">KASSE_NAME</div>
<div class="t" style="left:1040.00px;top:296.00px;font-size:8.2px;line-height:8.2px;transform:scaleX(0.8300);">IK_KVK</div>
<div class="t" style="left:1079.60px;top:296.00px;font-size:8.2px;line-height:8.2px;transform:scaleX(0.8300);">IKEbr</div>
<div class="a" style="left:1121.30px;top:294.40px;width:11.40px;height:418.10px;background:repeating-conic-gradient(#f0f0f0 0 25%,#fdfdfd 0 50%) 0 0/2px 2px;"></div>
<div class="a" style="left:1121.30px;top:294.40px;width:11.40px;height:11.00px;background:#f1f1f1;box-shadow:inset -1.2px -1.6px 0 #a6a6a6, inset 1px 1px 0 #e4e4e4;"></div>
<svg class="a" style="left:1124.0px;top:298.0px" width="5.6" height="3.2" viewBox="0 0 5.6 3.2"><path d="M0 3.2 L2.8 0 L5.6 3.2 Z" fill="#000"/></svg>
<div class="a" style="left:1121.30px;top:305.40px;width:11.40px;height:12.00px;background:#efefef;box-shadow:inset -1.2px -1.6px 0 #a6a6a6, inset 1px 1px 0 #e4e4e4;"></div>
<div class="a" style="left:1121.30px;top:701.50px;width:11.40px;height:11.00px;background:#f1f1f1;box-shadow:inset -1.2px -1.6px 0 #a6a6a6, inset 1px 1px 0 #e4e4e4;"></div>
<svg class="a" style="left:1124.0px;top:705.3px" width="5.6" height="3.2" viewBox="0 0 5.6 3.2"><path d="M0 0 L2.8 3.2 L5.6 0 Z" fill="#000"/></svg>
<div class="clip" style="left:99px;top:304.5px;width:1018px;height:407.5px;">
<div class="a" style="left:522.60px;top:0.55px;width:26.40px;height:10.30px;background:#2e6aa5;"></div>
<div class="a" style="left:593.60px;top:0.55px;width:86.40px;height:10.30px;background:#2e6aa5;"></div>
<div class="t" style="left:19.20px;top:1.90px;font-size:8.8px;line-height:8.8px;transform:scaleX(0.8070);">2373</div>
<div class="t" style="left:39.60px;top:1.90px;font-size:8.8px;line-height:8.8px;transform:scaleX(0.8070);">2173</div>
<div class="t" style="left:69.05px;top:1.90px;font-size:8.8px;line-height:8.8px;transform:scaleX(0.8070);">1</div>
<div class="t" style="left:77.60px;top:1.90px;font-size:8.8px;line-height:8.8px;transform:scaleX(0.8070);">1833</div>
<div class="t" style="left:96.60px;top:1.90px;font-size:8.8px;line-height:8.8px;transform:scaleX(0.7920);">Pesone</div>
<div class="t" style="left:153.80px;top:1.90px;font-size:8.8px;line-height:8.8px;transform:scaleX(0.7920);">Zaldar</div>
<div class="t" style="left:211.00px;top:1.90px;font-size:8.8px;line-height:8.8px;transform:scaleX(0.8070);">25.06.1970</div>
<div class="t" style="left:264.60px;top:1.90px;font-size:8.8px;line-height:8.8px;transform:scaleX(0.8070);">17.01.2022</div>
<div class="t" style="left:304.90px;top:1.90px;font-size:8.8px;line-height:8.8px;transform:scaleX(0.8070);">20.01.2022</div>
<div class="t" style="left:344.80px;top:1.90px;font-size:8.8px;line-height:8.8px;transform:scaleX(0.8070);">12.03.2023</div>
<div class="t" style="left:405.70px;top:1.90px;font-size:8.8px;line-height:8.8px;transform:scaleX(0.8070);">04.07.2023</div>
<div class="t" style="left:479.46px;top:1.90px;font-size:8.8px;line-height:8.8px;transform:scaleX(0.8070);">12.09.2023</div>
<div class="t" style="left:539.50px;top:1.90px;font-size:8.8px;line-height:8.8px;transform:scaleX(0.8070);color:#dde6f1;">18</div>
<div class="t" style="left:673.65px;top:1.90px;font-size:8.8px;line-height:8.8px;transform:scaleX(0.8070);color:#dde6f1;">1</div>
<div class="t" style="left:744.80px;top:1.90px;font-size:8.8px;line-height:8.8px;transform:scaleX(0.7920);">AOK Plus Thüringen</div>
<div class="t" style="left:940.45px;top:1.90px;font-size:8.8px;line-height:8.8px;transform:scaleX(0.8070);">105999018</div>
<div class="t" style="left:980.45px;top:1.90px;font-size:8.8px;line-height:8.8px;transform:scaleX(0.8070);">441612217</div>
<div class="a" style="left:522.60px;top:10.84px;width:26.40px;height:10.30px;background:#2e6aa5;"></div>
<div class="a" style="left:593.60px;top:10.84px;width:86.40px;height:10.30px;background:#2e6aa5;"></div>
<div class="t" style="left:19.20px;top:12.19px;font-size:8.8px;line-height:8.8px;transform:scaleX(0.8070);">2374</div>
<div class="t" style="left:39.60px;top:12.19px;font-size:8.8px;line-height:8.8px;transform:scaleX(0.8070);">1371</div>
<div class="t" style="left:69.05px;top:12.19px;font-size:8.8px;line-height:8.8px;transform:scaleX(0.8070);">2</div>
<div class="t" style="left:77.60px;top:12.19px;font-size:8.8px;line-height:8.8px;transform:scaleX(0.8070);">1205</div>
<div class="t" style="left:96.60px;top:12.19px;font-size:8.8px;line-height:8.8px;transform:scaleX(0.7920);">Zaena</div>
<div class="t" style="left:153.80px;top:12.19px;font-size:8.8px;line-height:8.8px;transform:scaleX(0.7920);">Ekar</div>
<div class="t" style="left:211.00px;top:12.19px;font-size:8.8px;line-height:8.8px;transform:scaleX(0.8070);">13.04.1954</div>
<div class="t" style="left:264.60px;top:12.19px;font-size:8.8px;line-height:8.8px;transform:scaleX(0.8070);">15.03.2022</div>
<div class="t" style="left:304.90px;top:12.19px;font-size:8.8px;line-height:8.8px;transform:scaleX(0.8070);">16.03.2022</div>
<div class="t" style="left:344.80px;top:12.19px;font-size:8.8px;line-height:8.8px;transform:scaleX(0.8070);">03.10.2023</div>
<div class="t" style="left:405.70px;top:12.19px;font-size:8.8px;line-height:8.8px;transform:scaleX(0.8070);">20.07.2023</div>
<div class="t" style="left:539.50px;top:12.19px;font-size:8.8px;line-height:8.8px;transform:scaleX(0.8070);color:#dde6f1;">43</div>
<div class="t" style="left:673.65px;top:12.19px;font-size:8.8px;line-height:8.8px;transform:scaleX(0.8070);color:#dde6f1;">1</div>
<div class="t" style="left:744.80px;top:12.19px;font-size:8.8px;line-height:8.8px;transform:scaleX(0.7920);">AOK Plus Thüringen</div>
<div class="t" style="left:940.45px;top:12.19px;font-size:8.8px;line-height:8.8px;transform:scaleX(0.8070);">105999018</div>
<div class="t" style="left:981.51px;top:12.19px;font-size:8.8px;line-height:8.8px;transform:scaleX(0.8070);">441112212</div>
<div class="a" style="left:522.60px;top:21.13px;width:26.40px;height:10.30px;background:#2e6aa5;"></div>
<div class="a" style="left:593.60px;top:21.13px;width:86.40px;height:10.30px;background:#2e6aa5;"></div>
<div class="t" style="left:19.20px;top:22.48px;font-size:8.8px;line-height:8.8px;transform:scale(0.8070,0.8);">2375</div>
<div class="t" style="left:39.60px;top:22.48px;font-size:8.8px;line-height:8.8px;transform:scale(0.8070,0.8);">2274</div>
<div class="t" style="left:69.05px;top:22.48px;font-size:8.8px;line-height:8.8px;transform:scale(0.8070,0.8);">1</div>
<div class="t" style="left:77.60px;top:22.48px;font-size:8.8px;line-height:8.8px;transform:scale(0.8070,0.8);">1204</div>
<div class="t" style="left:96.60px;top:22.48px;font-size:8.8px;line-height:8.8px;transform:scale(0.7920,0.8);">Sorinday</div>
<div class="t" style="left:153.80px;top:22.48px;font-size:8.8px;line-height:8.8px;transform:scale(0.7920,0.8);">Ekar</div>
<div class="t" style="left:211.00px;top:22.48px;font-size:8.8px;line-height:8.8px;transform:scale(0.8070,0.8);">10.07.1931</div>
<div class="t" style="left:264.60px;top:22.48px;font-size:8.8px;line-height:8.8px;transform:scale(0.8070,0.8);">15.03.2022</div>
<div class="t" style="left:304.90px;top:22.48px;font-size:8.8px;line-height:8.8px;transform:scale(0.8070,0.8);">16.03.2022</div>
<div class="t" style="left:344.80px;top:22.48px;font-size:8.8px;line-height:8.8px;transform:scale(0.8070,0.8);">03.10.2023</div>
<div class="t" style="left:405.70px;top:22.48px;font-size:8.8px;line-height:8.8px;transform:scale(0.8070,0.8);">20.07.2023</div>
<div class="t" style="left:539.50px;top:22.48px;font-size:8.8px;line-height:8.8px;transform:scale(0.8070,0.8);color:#dde6f1;">43</div>
<div class="t" style="left:673.65px;top:22.48px;font-size:8.8px;line-height:8.8px;transform:scale(0.8070,0.8);color:#dde6f1;">1</div>
<div class="t" style="left:744.80px;top:22.48px;font-size:8.8px;line-height:8.8px;transform:scale(0.7920,0.8);">IKK classic</div>
<div class="t" style="left:940.98px;top:22.48px;font-size:8.8px;line-height:8.8px;transform:scale(0.8070,0.8);">105300116</div>
<div class="t" style="left:980.45px;top:22.48px;font-size:8.8px;line-height:8.8px;transform:scale(0.8070,0.8);">441612217</div>
<div class="a" style="left:35.90px;top:31.43px;width:982.10px;height:10.30px;background:#ec7203;"></div>
<div class="a" style="left:15.00px;top:31.03px;width:21.00px;height:9.80px;border:1px dotted #666;box-sizing:border-box;"></div>
<div class="t" style="left:18.00px;top:32.78px;font-size:8.8px;line-height:8.8px;transform:scaleX(0.8070);color:#1a1208;">2379</div>
<div class="t" style="left:43.55px;top:32.78px;font-size:8.8px;line-height:8.8px;transform:scaleX(0.8070);color:#1a1208;">924</div>
<div class="t" style="left:69.05px;top:32.78px;font-size:8.8px;line-height:8.8px;transform:scaleX(0.8070);color:#1a1208;">4</div>
<div class="t" style="left:89.45px;top:32.78px;font-size:8.8px;line-height:8.8px;transform:scaleX(0.8070);color:#1a1208;">1</div>
<div class="t" style="left:96.60px;top:32.78px;font-size:8.8px;line-height:8.8px;transform:scaleX(0.7920);color:#1a1208;">Haagaselba</div>
<div class="t" style="left:153.80px;top:32.78px;font-size:8.8px;line-height:8.8px;transform:scaleX(0.7920);color:#1a1208;">Erzlachn</div>
<div class="t" style="left:211.00px;top:32.78px;font-size:8.8px;line-height:8.8px;transform:scaleX(0.8070);color:#1a1208;">02.09.1951</div>
<div class="t" style="left:264.60px;top:32.78px;font-size:8.8px;line-height:8.8px;transform:scaleX(0.8070);color:#1a1208;">15.03.2022</div>
<div class="t" style="left:304.90px;top:32.78px;font-size:8.8px;line-height:8.8px;transform:scaleX(0.8070);color:#1a1208;">16.03.2022</div>
<div class="t" style="left:344.80px;top:32.78px;font-size:8.8px;line-height:8.8px;transform:scaleX(0.8070);color:#1a1208;">05.04.2025</div>
<div class="t" style="left:405.70px;top:32.78px;font-size:8.8px;line-height:8.8px;transform:scaleX(0.8070);color:#1a1208;">17.07.2023</div>
<div class="t" style="left:539.50px;top:32.78px;font-size:8.8px;line-height:8.8px;transform:scaleX(0.8070);color:#1a1208;">32</div>
<div class="t" style="left:673.65px;top:32.78px;font-size:8.8px;line-height:8.8px;transform:scaleX(0.8070);color:#ec7203;">1</div>
<div class="t" style="left:744.80px;top:32.78px;font-size:8.8px;line-height:8.8px;transform:scaleX(0.7920);color:#1a1208;">TECHNIKER KRANKENKASSE</div>
<div class="t" style="left:940.45px;top:32.78px;font-size:8.8px;line-height:8.8px;transform:scaleX(0.8070);color:#1a1208;">105077504</div>
<div class="t" style="left:980.45px;top:32.78px;font-size:8.8px;line-height:8.8px;transform:scaleX(0.8070);color:#1a1208;">441612217</div>
<div class="a" style="left:522.60px;top:41.72px;width:26.40px;height:10.30px;background:#2e6aa5;"></div>
<div class="a" style="left:593.60px;top:41.72px;width:86.40px;height:10.30px;background:#2e6aa5;"></div>
<div class="t" style="left:19.20px;top:43.07px;font-size:8.8px;line-height:8.8px;transform:scaleX(0.8070);">2381</div>
<div class="t" style="left:39.60px;top:43.07px;font-size:8.8px;line-height:8.8px;transform:scaleX(0.8070);">2277</div>
<div class="t" style="left:69.05px;top:43.07px;font-size:8.8px;line-height:8.8px;transform:scaleX(0.8070);">1</div>
<div class="t" style="left:77.60px;top:43.07px;font-size:8.8px;line-height:8.8px;transform:scaleX(0.8070);">1899</div>
<div class="t" style="left:96.60px;top:43.07px;font-size:8.8px;line-height:8.8px;transform:scaleX(0.7920);">Nesele</div>
<div class="t" style="left:153.80px;top:43.07px;font-size:8.8px;line-height:8.8px;transform:scaleX(0.7920);">Zacp</div>
<div class="t" style="left:211.00px;top:43.07px;font-size:8.8px;line-height:8.8px;transform:scaleX(0.8070);">01.04.1986</div>
<div class="t" style="left:264.60px;top:43.07px;font-size:8.8px;line-height:8.8px;transform:scaleX(0.8070);">01.02.2022</div>
<div class="t" style="left:304.90px;top:43.07px;font-size:8.8px;line-height:8.8px;transform:scaleX(0.8070);">09.02.2022</div>
<div class="t" style="left:344.80px;top:43.07px;font-size:8.8px;line-height:8.8px;transform:scaleX(0.8070);">18.09.2023</div>
<div class="t" style="left:405.70px;top:43.07px;font-size:8.8px;line-height:8.8px;transform:scaleX(0.8070);">06.07.2023</div>
<div class="t" style="left:479.46px;top:43.07px;font-size:8.8px;line-height:8.8px;transform:scaleX(0.8070);">18.09.2023</div>
<div class="t" style="left:539.50px;top:43.07px;font-size:8.8px;line-height:8.8px;transform:scaleX(0.8070);color:#dde6f1;">30</div>
<div class="t" style="left:673.65px;top:43.07px;font-size:8.8px;line-height:8.8px;transform:scaleX(0.8070);color:#dde6f1;">1</div>
<div class="t" style="left:744.80px;top:43.07px;font-size:8.8px;line-height:8.8px;transform:scaleX(0.7920);">TECHNIKER KRANKENKASSE</div>
<div class="t" style="left:940.45px;top:43.07px;font-size:8.8px;line-height:8.8px;transform:scaleX(0.8070);">105077504</div>
<div class="t" style="left:980.45px;top:43.07px;font-size:8.8px;line-height:8.8px;transform:scaleX(0.8070);">441612217</div>
<div class="a" style="left:522.60px;top:52.01px;width:26.40px;height:10.30px;background:#2e6aa5;"></div>
<div class="a" style="left:593.60px;top:52.01px;width:86.40px;height:10.30px;background:#2e6aa5;"></div>
<div class="t" style="left:19.20px;top:53.36px;font-size:8.8px;line-height:8.8px;transform:scaleX(0.8070);">2390</div>
<div class="t" style="left:39.60px;top:53.36px;font-size:8.8px;line-height:8.8px;transform:scaleX(0.8070);">2293</div>
<div class="t" style="left:69.05px;top:53.36px;font-size:8.8px;line-height:8.8px;transform:scaleX(0.8070);">1</div>
<div class="t" style="left:77.60px;top:53.36px;font-size:8.8px;line-height:8.8px;transform:scaleX(0.8070);">1912</div>
<div class="t" style="left:96.60px;top:53.36px;font-size:8.8px;line-height:8.8px;transform:scaleX(0.7920);">Neneroje</div>
<div class="t" style="left:153.80px;top:53.36px;font-size:8.8px;line-height:8.8px;transform:scaleX(0.7920);">Erzlachn</div>
<div class="t" style="left:211.00px;top:53.36px;font-size:8.8px;line-height:8.8px;transform:scaleX(0.8070);">02.08.1947</div>
<div class="t" style="left:264.60px;top:53.36px;font-size:8.8px;line-height:8.8px;transform:scaleX(0.8070);">03.03.2022</div>
<div class="t" style="left:304.90px;top:53.36px;font-size:8.8px;line-height:8.8px;transform:scaleX(0.8070);">22.03.2022</div>
<div class="t" style="left:344.80px;top:53.36px;font-size:8.8px;line-height:8.8px;transform:scaleX(0.8070);">19.09.2023</div>
<div class="t" style="left:405.70px;top:53.36px;font-size:8.8px;line-height:8.8px;transform:scaleX(0.8070);">18.07.2023</div>
<div class="t" style="left:479.46px;top:53.36px;font-size:8.8px;line-height:8.8px;transform:scaleX(0.8070);">19.09.2023</div>
<div class="t" style="left:539.50px;top:53.36px;font-size:8.8px;line-height:8.8px;transform:scaleX(0.8070);color:#dde6f1;">17</div>
<div class="t" style="left:673.65px;top:53.36px;font-size:8.8px;line-height:8.8px;transform:scaleX(0.8070);color:#dde6f1;">1</div>
<div class="t" style="left:744.80px;top:53.36px;font-size:8.8px;line-height:8.8px;transform:scaleX(0.7920);">TECHNIKER KRANKENKASSE</div>
<div class="t" style="left:940.45px;top:53.36px;font-size:8.8px;line-height:8.8px;transform:scaleX(0.8070);">105077504</div>
<div class="t" style="left:980.45px;top:53.36px;font-size:8.8px;line-height:8.8px;transform:scaleX(0.8070);">441612217</div>
<div class="a" style="left:522.60px;top:62.30px;width:26.40px;height:10.30px;background:#2e6aa5;"></div>
<div class="a" style="left:593.60px;top:62.30px;width:86.40px;height:10.30px;background:#2e6aa5;"></div>
<div class="t" style="left:19.20px;top:63.65px;font-size:8.8px;line-height:8.8px;transform:scaleX(0.8070);">2404</div>
<div class="t" style="left:39.60px;top:63.65px;font-size:8.8px;line-height:8.8px;transform:scaleX(0.8070);">2302</div>
<div class="t" style="left:69.05px;top:63.65px;font-size:8.8px;line-height:8.8px;transform:scaleX(0.8070);">1</div>
<div class="t" style="left:89.45px;top:63.65px;font-size:8.8px;line-height:8.8px;transform:scaleX(0.8070);">7</div>
<div class="t" style="left:96.60px;top:63.65px;font-size:8.8px;line-height:8.8px;transform:scaleX(0.7920);">Enone</div>
<div class="t" style="left:153.80px;top:63.65px;font-size:8.8px;line-height:8.8px;transform:scaleX(0.7920);">Zeual</div>
<div class="t" style="left:211.00px;top:63.65px;font-size:8.8px;line-height:8.8px;transform:scaleX(0.8070);">16.01.1942</div>
<div class="t" style="left:264.60px;top:63.65px;font-size:8.8px;line-height:8.8px;transform:scaleX(0.8070);">17.03.2022</div>
<div class="t" style="left:304.90px;top:63.65px;font-size:8.8px;line-height:8.8px;transform:scaleX(0.8070);">22.03.2022</div>
<div class="t" style="left:344.80px;top:63.65px;font-size:8.8px;line-height:8.8px;transform:scaleX(0.8070);">27.09.2023</div>
<div class="t" style="left:405.70px;top:63.65px;font-size:8.8px;line-height:8.8px;transform:scaleX(0.8070);">21.06.2023</div>
<div class="t" style="left:479.46px;top:63.65px;font-size:8.8px;line-height:8.8px;transform:scaleX(0.8070);">27.09.2023</div>
<div class="t" style="left:539.50px;top:63.65px;font-size:8.8px;line-height:8.8px;transform:scaleX(0.8070);color:#dde6f1;">29</div>
<div class="t" style="left:673.65px;top:63.65px;font-size:8.8px;line-height:8.8px;transform:scaleX(0.8070);color:#dde6f1;">1</div>
<div class="t" style="left:744.80px;top:63.65px;font-size:8.8px;line-height:8.8px;transform:scaleX(0.7920);">BARMER</div>
<div class="t" style="left:940.45px;top:63.65px;font-size:8.8px;line-height:8.8px;transform:scaleX(0.8070);">105080008</div>
<div class="t" style="left:980.45px;top:63.65px;font-size:8.8px;line-height:8.8px;transform:scaleX(0.8070);">441612217</div>
<div class="a" style="left:522.60px;top:72.59px;width:26.40px;height:10.30px;background:#2e6aa5;"></div>
<div class="a" style="left:593.60px;top:72.59px;width:86.40px;height:10.30px;background:#2e6aa5;"></div>
<div class="t" style="left:19.20px;top:73.94px;font-size:8.8px;line-height:8.8px;transform:scaleX(0.8070);">2407</div>
<div class="t" style="left:39.60px;top:73.94px;font-size:8.8px;line-height:8.8px;transform:scaleX(0.8070);">2307</div>
<div class="t" style="left:69.05px;top:73.94px;font-size:8.8px;line-height:8.8px;transform:scaleX(0.8070);">1</div>
<div class="t" style="left:77.60px;top:73.94px;font-size:8.8px;line-height:8.8px;transform:scaleX(0.8070);">1923</div>
<div class="t" style="left:96.60px;top:73.94px;font-size:8.8px;line-height:8.8px;transform:scaleX(0.7920);">Dlana</div>
<div class="t" style="left:153.80px;top:73.94px;font-size:8.8px;line-height:8.8px;transform:scaleX(0.7920);">Hetmmcha</div>
<div class="t" style="left:211.00px;top:73.94px;font-size:8.8px;line-height:8.8px;transform:scaleX(0.8070);">26.02.1963</div>
<div class="t" style="left:264.60px;top:73.94px;font-size:8.8px;line-height:8.8px;transform:scaleX(0.8070);">22.03.2022</div>
<div class="t" style="left:304.90px;top:73.94px;font-size:8.8px;line-height:8.8px;transform:scaleX(0.8070);">30.03.2022</div>
<div class="t" style="left:344.80px;top:73.94px;font-size:8.8px;line-height:8.8px;transform:scaleX(0.8070);">19.09.2023</div>
<div class="t" style="left:405.70px;top:73.94px;font-size:8.8px;line-height:8.8px;transform:scaleX(0.8070);">21.07.2023</div>
<div class="t" style="left:479.46px;top:73.94px;font-size:8.8px;line-height:8.8px;transform:scaleX(0.8070);">19.09.2023</div>
<div class="t" style="left:539.50px;top:73.94px;font-size:8.8px;line-height:8.8px;transform:scaleX(0.8070);color:#dde6f1;">33</div>
<div class="t" style="left:673.65px;top:73.94px;font-size:8.8px;line-height:8.8px;transform:scaleX(0.8070);color:#dde6f1;">1</div>
<div class="t" style="left:744.80px;top:73.94px;font-size:8.8px;line-height:8.8px;transform:scaleX(0.7920);">IKK Classic (Ost)</div>
<div class="t" style="left:940.45px;top:73.94px;font-size:8.8px;line-height:8.8px;transform:scaleX(0.8070);">107202793</div>
<div class="t" style="left:981.51px;top:73.94px;font-size:8.8px;line-height:8.8px;transform:scaleX(0.8070);">441112212</div>
<div class="a" style="left:522.60px;top:82.89px;width:26.40px;height:10.30px;background:#2e6aa5;"></div>
<div class="a" style="left:593.60px;top:82.89px;width:86.40px;height:10.30px;background:#2e6aa5;"></div>
<div class="t" style="left:19.20px;top:84.24px;font-size:8.8px;line-height:8.8px;transform:scale(0.8070,0.8);">2451</div>
<div class="t" style="left:39.60px;top:84.24px;font-size:8.8px;line-height:8.8px;transform:scale(0.8070,0.8);">2376</div>
<div class="t" style="left:69.05px;top:84.24px;font-size:8.8px;line-height:8.8px;transform:scale(0.8070,0.8);">1</div>
<div class="t" style="left:77.60px;top:84.24px;font-size:8.8px;line-height:8.8px;transform:scale(0.8070,0.8);">1974</div>
<div class="t" style="left:96.60px;top:84.24px;font-size:8.8px;line-height:8.8px;transform:scale(0.7920,0.8);">Janm</div>
<div class="t" style="left:153.80px;top:84.24px;font-size:8.8px;line-height:8.8px;transform:scale(0.7920,0.8);">Einum</div>
<div class="t" style="left:211.00px;top:84.24px;font-size:8.8px;line-height:8.8px;transform:scale(0.8070,0.8);">06.07.1970</div>
<div class="t" style="left:264.60px;top:84.24px;font-size:8.8px;line-height:8.8px;transform:scale(0.8070,0.8);">09.05.2022</div>
<div class="t" style="left:304.90px;top:84.24px;font-size:8.8px;line-height:8.8px;transform:scale(0.8070,0.8);">12.05.2022</div>
<div class="t" style="left:344.80px;top:84.24px;font-size:8.8px;line-height:8.8px;transform:scale(0.8070,0.8);">08.11.2023</div>
<div class="t" style="left:405.70px;top:84.24px;font-size:8.8px;line-height:8.8px;transform:scale(0.8070,0.8);">19.06.2023</div>
<div class="t" style="left:479.98px;top:84.24px;font-size:8.8px;line-height:8.8px;transform:scale(0.8070,0.8);">08.11.2023</div>
<div class="t" style="left:539.50px;top:84.24px;font-size:8.8px;line-height:8.8px;transform:scale(0.8070,0.8);color:#dde6f1;">25</div>
<div class="t" style="left:673.65px;top:84.24px;font-size:8.8px;line-height:8.8px;transform:scale(0.8070,0.8);color:#dde6f1;">1</div>
<div class="t" style="left:744.80px;top:84.24px;font-size:8.8px;line-height:8.8px;transform:scale(0.7920,0.8);">DAK Gesundheit</div>
<div class="t" style="left:940.45px;top:84.24px;font-size:8.8px;line-height:8.8px;transform:scale(0.8070,0.8);">105836717</div>
<div class="t" style="left:980.45px;top:84.24px;font-size:8.8px;line-height:8.8px;transform:scale(0.8070,0.8);">441612217</div>
<div class="a" style="left:522.60px;top:93.18px;width:26.40px;height:10.30px;background:#2e6aa5;"></div>
<div class="a" style="left:593.60px;top:93.18px;width:86.40px;height:10.30px;background:#2e6aa5;"></div>
<div class="t" style="left:19.20px;top:94.53px;font-size:8.8px;line-height:8.8px;transform:scaleX(0.8070);">2452</div>
<div class="t" style="left:39.60px;top:94.53px;font-size:8.8px;line-height:8.8px;transform:scaleX(0.8070);">2377</div>
<div class="t" style="left:69.05px;top:94.53px;font-size:8.8px;line-height:8.8px;transform:scaleX(0.8070);">1</div>
<div class="t" style="left:77.60px;top:94.53px;font-size:8.8px;line-height:8.8px;transform:scaleX(0.8070);">1975</div>
<div class="t" style="left:96.60px;top:94.53px;font-size:8.8px;line-height:8.8px;transform:scaleX(0.7920);">Ufa</div>
<div class="t" style="left:153.80px;top:94.53px;font-size:8.8px;line-height:8.8px;transform:scaleX(0.7920);">Fiefig</div>
<div class="t" style="left:211.00px;top:94.53px;font-size:8.8px;line-height:8.8px;transform:scaleX(0.8070);">18.11.1955</div>
<div class="t" style="left:264.60px;top:94.53px;font-size:8.8px;line-height:8.8px;transform:scaleX(0.8070);">05.05.2022</div>
<div class="t" style="left:304.90px;top:94.53px;font-size:8.8px;line-height:8.8px;transform:scaleX(0.8070);">09.05.2022</div>
<div class="t" style="left:344.80px;top:94.53px;font-size:8.8px;line-height:8.8px;transform:scaleX(0.8070);">27.10.2023</div>
<div class="t" style="left:405.70px;top:94.53px;font-size:8.8px;line-height:8.8px;transform:scaleX(0.8070);">25.07.2023</div>
<div class="t" style="left:479.46px;top:94.53px;font-size:8.8px;line-height:8.8px;transform:scaleX(0.8070);">27.10.2023</div>
<div class="t" style="left:539.50px;top:94.53px;font-size:8.8px;line-height:8.8px;transform:scaleX(0.8070);color:#dde6f1;">23</div>
<div class="t" style="left:673.65px;top:94.53px;font-size:8.8px;line-height:8.8px;transform:scaleX(0.8070);color:#dde6f1;">1</div>
<div class="t" style="left:744.80px;top:94.53px;font-size:8.8px;line-height:8.8px;transform:scaleX(0.7920);">IKK Classic (Ost)</div>
<div class="t" style="left:940.45px;top:94.53px;font-size:8.8px;line-height:8.8px;transform:scaleX(0.8070);">107202793</div>
<div class="t" style="left:981.51px;top:94.53px;font-size:8.8px;line-height:8.8px;transform:scaleX(0.8070);">441112212</div>
<div class="a" style="left:522.60px;top:103.47px;width:26.40px;height:10.30px;background:#2e6aa5;"></div>
<div class="a" style="left:593.60px;top:103.47px;width:86.40px;height:10.30px;background:#2e6aa5;"></div>
<div class="t" style="left:19.20px;top:104.82px;font-size:8.8px;line-height:8.8px;transform:scaleX(0.8070);">2454</div>
<div class="t" style="left:39.60px;top:104.82px;font-size:8.8px;line-height:8.8px;transform:scaleX(0.8070);">2151</div>
<div class="t" style="left:69.05px;top:104.82px;font-size:8.8px;line-height:8.8px;transform:scaleX(0.8070);">2</div>
<div class="t" style="left:77.60px;top:104.82px;font-size:8.8px;line-height:8.8px;transform:scaleX(0.8070);">1816</div>
<div class="t" style="left:96.60px;top:104.82px;font-size:8.8px;line-height:8.8px;transform:scaleX(0.7920);">Haopa</div>
<div class="t" style="left:153.80px;top:104.82px;font-size:8.8px;line-height:8.8px;transform:scaleX(0.7920);">Zaldmett</div>
<div class="t" style="left:211.00px;top:104.82px;font-size:8.8px;line-height:8.8px;transform:scaleX(0.8070);">24.01.1961</div>
<div class="t" style="left:264.60px;top:104.82px;font-size:8.8px;line-height:8.8px;transform:scaleX(0.8070);">10.05.2022</div>
<div class="t" style="left:304.90px;top:104.82px;font-size:8.8px;line-height:8.8px;transform:scaleX(0.8070);">18.05.2022</div>
<div class="t" style="left:344.80px;top:104.82px;font-size:8.8px;line-height:8.8px;transform:scaleX(0.8070);">06.07.2025</div>
<div class="t" style="left:405.70px;top:104.82px;font-size:8.8px;line-height:8.8px;transform:scaleX(0.8070);">19.07.2023</div>
<div class="t" style="left:539.50px;top:104.82px;font-size:8.8px;line-height:8.8px;transform:scaleX(0.8070);color:#dde6f1;">18</div>
<div class="t" style="left:673.65px;top:104.82px;font-size:8.8px;line-height:8.8px;transform:scaleX(0.8070);color:#dde6f1;">1</div>
<div class="t" style="left:744.80px;top:104.82px;font-size:8.8px;line-height:8.8px;transform:scaleX(0.7920);">TECHNIKER KRANKENKASSE</div>
<div class="t" style="left:940.45px;top:104.82px;font-size:8.8px;line-height:8.8px;transform:scaleX(0.8070);">105077504</div>
<div class="t" style="left:980.45px;top:104.82px;font-size:8.8px;line-height:8.8px;transform:scaleX(0.8070);">441612217</div>
<div class="a" style="left:522.60px;top:113.76px;width:26.40px;height:10.30px;background:#2e6aa5;"></div>
<div class="a" style="left:593.60px;top:113.76px;width:86.40px;height:10.30px;background:#2e6aa5;"></div>
<div class="t" style="left:19.20px;top:115.11px;font-size:8.8px;line-height:8.8px;transform:scaleX(0.8070);">2456</div>
<div class="t" style="left:39.60px;top:115.11px;font-size:8.8px;line-height:8.8px;transform:scaleX(0.8070);">2378</div>
<div class="t" style="left:69.05px;top:115.11px;font-size:8.8px;line-height:8.8px;transform:scaleX(0.8070);">1</div>
<div class="t" style="left:81.55px;top:115.11px;font-size:8.8px;line-height:8.8px;transform:scaleX(0.8070);">174</div>
<div class="t" style="left:96.60px;top:115.11px;font-size:8.8px;line-height:8.8px;transform:scaleX(0.7920);">Ulmure</div>
<div class="t" style="left:153.80px;top:115.11px;font-size:8.8px;line-height:8.8px;transform:scaleX(0.7920);">Hammazelnh</div>
<div class="t" style="left:211.00px;top:115.11px;font-size:8.8px;line-height:8.8px;transform:scaleX(0.8070);">17.03.1952</div>
<div class="t" style="left:264.60px;top:115.11px;font-size:8.8px;line-height:8.8px;transform:scaleX(0.8070);">12.04.2022</div>
<div class="t" style="left:304.90px;top:115.11px;font-size:8.8px;line-height:8.8px;transform:scaleX(0.8070);">02.05.2022</div>
<div class="t" style="left:344.80px;top:115.11px;font-size:8.8px;line-height:8.8px;transform:scaleX(0.8070);">29.10.2023</div>
<div class="t" style="left:405.70px;top:115.11px;font-size:8.8px;line-height:8.8px;transform:scaleX(0.8070);">07.07.2023</div>
<div class="t" style="left:479.46px;top:115.11px;font-size:8.8px;line-height:8.8px;transform:scaleX(0.8070);">29.10.2023</div>
<div class="t" style="left:539.50px;top:115.11px;font-size:8.8px;line-height:8.8px;transform:scaleX(0.8070);color:#dde6f1;">37</div>
<div class="t" style="left:673.65px;top:115.11px;font-size:8.8px;line-height:8.8px;transform:scaleX(0.8070);color:#dde6f1;">1</div>
<div class="t" style="left:744.80px;top:115.11px;font-size:8.8px;line-height:8.8px;transform:scaleX(0.7920);">DAK Gesundheit</div>
<div class="t" style="left:940.45px;top:115.11px;font-size:8.8px;line-height:8.8px;transform:scaleX(0.8070);">105836717</div>
<div class="t" style="left:981.51px;top:115.11px;font-size:8.8px;line-height:8.8px;transform:scaleX(0.8070);">441112212</div>
<div class="a" style="left:522.60px;top:124.05px;width:26.40px;height:10.30px;background:#2e6aa5;"></div>
<div class="a" style="left:593.60px;top:124.05px;width:86.40px;height:10.30px;background:#2e6aa5;"></div>
<div class="t" style="left:19.20px;top:125.40px;font-size:8.8px;line-height:8.8px;transform:scaleX(0.8070);">2465</div>
<div class="t" style="left:39.60px;top:125.40px;font-size:8.8px;line-height:8.8px;transform:scaleX(0.8070);">2389</div>
<div class="t" style="left:69.05px;top:125.40px;font-size:8.8px;line-height:8.8px;transform:scaleX(0.8070);">1</div>
<div class="t" style="left:77.60px;top:125.40px;font-size:8.8px;line-height:8.8px;transform:scaleX(0.8070);">1986</div>
<div class="t" style="left:96.60px;top:125.40px;font-size:8.8px;line-height:8.8px;transform:scaleX(0.7920);">Dlon</div>
<div class="t" style="left:153.80px;top:125.40px;font-size:8.8px;line-height:8.8px;transform:scaleX(0.7920);">Höhl</div>
<div class="t" style="left:211.00px;top:125.40px;font-size:8.8px;line-height:8.8px;transform:scaleX(0.8070);">21.06.1980</div>
<div class="t" style="left:264.60px;top:125.40px;font-size:8.8px;line-height:8.8px;transform:scaleX(0.8070);">06.10.2021</div>
<div class="t" style="left:304.90px;top:125.40px;font-size:8.8px;line-height:8.8px;transform:scaleX(0.8070);">23.05.2022</div>
<div class="t" style="left:344.80px;top:125.40px;font-size:8.8px;line-height:8.8px;transform:scaleX(0.8070);">04.12.2023</div>
<div class="t" style="left:405.70px;top:125.40px;font-size:8.8px;line-height:8.8px;transform:scaleX(0.8070);">21.07.2023</div>
<div class="t" style="left:479.46px;top:125.40px;font-size:8.8px;line-height:8.8px;transform:scaleX(0.8070);">04.12.2023</div>
<div class="t" style="left:539.50px;top:125.40px;font-size:8.8px;line-height:8.8px;transform:scaleX(0.8070);color:#dde6f1;">31</div>
<div class="t" style="left:673.65px;top:125.40px;font-size:8.8px;line-height:8.8px;transform:scaleX(0.8070);color:#dde6f1;">1</div>
<div class="t" style="left:744.80px;top:125.40px;font-size:8.8px;line-height:8.8px;transform:scaleX(0.7920);">TECHNIKER KRANKENKASSE</div>
<div class="t" style="left:940.45px;top:125.40px;font-size:8.8px;line-height:8.8px;transform:scaleX(0.8070);">105077504</div>
<div class="t" style="left:981.51px;top:125.40px;font-size:8.8px;line-height:8.8px;transform:scaleX(0.8070);">441112212</div>
<div class="a" style="left:522.60px;top:134.35px;width:26.40px;height:10.30px;background:#2e6aa5;"></div>
<div class="a" style="left:593.60px;top:134.35px;width:86.40px;height:10.30px;background:#2e6aa5;"></div>
<div class="t" style="left:19.20px;top:135.70px;font-size:8.8px;line-height:8.8px;transform:scaleX(0.8070);">2471</div>
<div class="t" style="left:39.60px;top:135.70px;font-size:8.8px;line-height:8.8px;transform:scaleX(0.8070);">2398</div>
<div class="t" style="left:69.05px;top:135.70px;font-size:8.8px;line-height:8.8px;transform:scaleX(0.8070);">1</div>
<div class="t" style="left:89.45px;top:135.70px;font-size:8.8px;line-height:8.8px;transform:scaleX(0.8070);">8</div>
<div class="t" style="left:96.60px;top:135.70px;font-size:8.8px;line-height:8.8px;transform:scaleX(0.7920);">Chlonne</div>
<div class="t" style="left:153.80px;top:135.70px;font-size:8.8px;line-height:8.8px;transform:scaleX(0.7920);">Zaldtal</div>
<div class="t" style="left:211.00px;top:135.70px;font-size:8.8px;line-height:8.8px;transform:scaleX(0.8070);">20.09.1943</div>
<div class="t" style="left:264.60px;top:135.70px;font-size:8.8px;line-height:8.8px;transform:scaleX(0.8070);">11.05.2022</div>
<div class="t" style="left:304.90px;top:135.70px;font-size:8.8px;line-height:8.8px;transform:scaleX(0.8070);">17.05.2022</div>
<div class="t" style="left:344.80px;top:135.70px;font-size:8.8px;line-height:8.8px;transform:scaleX(0.8070);">07.12.2023</div>
<div class="t" style="left:405.70px;top:135.70px;font-size:8.8px;line-height:8.8px;transform:scaleX(0.8070);">26.05.2023</div>
<div class="t" style="left:479.46px;top:135.70px;font-size:8.8px;line-height:8.8px;transform:scaleX(0.8070);">07.12.2023</div>
<div class="t" style="left:539.50px;top:135.70px;font-size:8.8px;line-height:8.8px;transform:scaleX(0.8070);color:#dde6f1;">27</div>
<div class="t" style="left:673.65px;top:135.70px;font-size:8.8px;line-height:8.8px;transform:scaleX(0.8070);color:#dde6f1;">1</div>
<div class="t" style="left:744.80px;top:135.70px;font-size:8.8px;line-height:8.8px;transform:scaleX(0.7920);">BKK 24/Ost</div>
<div class="t" style="left:940.45px;top:135.70px;font-size:8.8px;line-height:8.8px;transform:scaleX(0.8070);">102732316</div>
<div class="t" style="left:980.45px;top:135.70px;font-size:8.8px;line-height:8.8px;transform:scaleX(0.8070);">441612217</div>
<div class="a" style="left:522.60px;top:144.64px;width:26.40px;height:10.30px;background:#2e6aa5;"></div>
<div class="a" style="left:593.60px;top:144.64px;width:86.40px;height:10.30px;background:#2e6aa5;"></div>
<div class="a" style="left:476.00px;top:144.64px;width:47.00px;height:10.30px;background:#2e6aa5;"></div>
<div class="t" style="left:19.20px;top:145.99px;font-size:8.8px;line-height:8.8px;transform:scaleX(0.8070);">2480</div>
<div class="t" style="left:39.60px;top:145.99px;font-size:8.8px;line-height:8.8px;transform:scaleX(0.8070);">2406</div>
<div class="t" style="left:69.05px;top:145.99px;font-size:8.8px;line-height:8.8px;transform:scaleX(0.8070);">1</div>
<div class="t" style="left:77.60px;top:145.99px;font-size:8.8px;line-height:8.8px;transform:scaleX(0.8070);">1995</div>
<div class="t" style="left:96.60px;top:145.99px;font-size:8.8px;line-height:8.8px;transform:scaleX(0.7920);">Pelon</div>
<div class="t" style="left:153.80px;top:145.99px;font-size:8.8px;line-height:8.8px;transform:scaleX(0.7920);">Palt</div>
<div class="t" style="left:211.00px;top:145.99px;font-size:8.8px;line-height:8.8px;transform:scaleX(0.8070);">30.06.1962</div>
<div class="t" style="left:264.60px;top:145.99px;font-size:8.8px;line-height:8.8px;transform:scaleX(0.8070);">25.05.2022</div>
<div class="t" style="left:304.90px;top:145.99px;font-size:8.8px;line-height:8.8px;transform:scaleX(0.8070);">08.06.2022</div>
<div class="t" style="left:344.80px;top:145.99px;font-size:8.8px;line-height:8.8px;transform:scaleX(0.8070);">10.12.2023</div>
<div class="t" style="left:405.70px;top:145.99px;font-size:8.8px;line-height:8.8px;transform:scaleX(0.8070);">01.02.2023</div>
<div class="t" style="left:479.98px;top:145.99px;font-size:8.8px;line-height:8.8px;transform:scaleX(0.8070);color:#dde6f1;">11.07.2023</div>
<div class="t" style="left:539.50px;top:145.99px;font-size:8.8px;line-height:8.8px;transform:scaleX(0.8070);color:#dde6f1;">23</div>
<div class="t" style="left:673.65px;top:145.99px;font-size:8.8px;line-height:8.8px;transform:scaleX(0.8070);color:#dde6f1;">1</div>
<div class="t" style="left:744.80px;top:145.99px;font-size:8.8px;line-height:8.8px;transform:scaleX(0.7920);">TBK Thüringer BKK</div>
<div class="t" style="left:940.45px;top:145.99px;font-size:8.8px;line-height:8.8px;transform:scaleX(0.8070);">105928809</div>
<div class="t" style="left:980.45px;top:145.99px;font-size:8.8px;line-height:8.8px;transform:scaleX(0.8070);">441612217</div>
<div class="a" style="left:522.60px;top:154.93px;width:26.40px;height:10.30px;background:#2e6aa5;"></div>
<div class="a" style="left:593.60px;top:154.93px;width:86.40px;height:10.30px;background:#2e6aa5;"></div>
<div class="t" style="left:19.20px;top:156.28px;font-size:8.8px;line-height:8.8px;transform:scaleX(0.8070);">2488</div>
<div class="t" style="left:39.60px;top:156.28px;font-size:8.8px;line-height:8.8px;transform:scaleX(0.8070);">2420</div>
<div class="t" style="left:69.05px;top:156.28px;font-size:8.8px;line-height:8.8px;transform:scaleX(0.8070);">1</div>
<div class="t" style="left:77.60px;top:156.28px;font-size:8.8px;line-height:8.8px;transform:scaleX(0.8070);">2005</div>
<div class="t" style="left:96.60px;top:156.28px;font-size:8.8px;line-height:8.8px;transform:scaleX(0.7920);">Mumenn</div>
<div class="t" style="left:153.80px;top:156.28px;font-size:8.8px;line-height:8.8px;transform:scaleX(0.7920);">Dlastal</div>
<div class="t" style="left:211.00px;top:156.28px;font-size:8.8px;line-height:8.8px;transform:scaleX(0.8070);">06.08.1992</div>
<div class="t" style="left:264.60px;top:156.28px;font-size:8.8px;line-height:8.8px;transform:scaleX(0.8070);">19.04.2022</div>
<div class="t" style="left:304.90px;top:156.28px;font-size:8.8px;line-height:8.8px;transform:scaleX(0.8070);">13.06.2022</div>
<div class="t" style="left:344.80px;top:156.28px;font-size:8.8px;line-height:8.8px;transform:scaleX(0.8070);">12.12.2023</div>
<div class="t" style="left:405.70px;top:156.28px;font-size:8.8px;line-height:8.8px;transform:scaleX(0.8070);">23.05.2023</div>
<div class="t" style="left:479.46px;top:156.28px;font-size:8.8px;line-height:8.8px;transform:scaleX(0.8070);">12.12.2023</div>
<div class="t" style="left:540.03px;top:156.28px;font-size:8.8px;line-height:8.8px;transform:scaleX(0.8070);color:#dde6f1;">11</div>
<div class="t" style="left:673.65px;top:156.28px;font-size:8.8px;line-height:8.8px;transform:scaleX(0.8070);color:#dde6f1;">1</div>
<div class="t" style="left:744.80px;top:156.28px;font-size:8.8px;line-height:8.8px;transform:scaleX(0.7920);">AOK Plus Thüringen</div>
<div class="t" style="left:940.45px;top:156.28px;font-size:8.8px;line-height:8.8px;transform:scaleX(0.8070);">105998018</div>
<div class="t" style="left:980.45px;top:156.28px;font-size:8.8px;line-height:8.8px;transform:scaleX(0.8070);">441612217</div>
<div class="a" style="left:522.60px;top:165.22px;width:26.40px;height:10.30px;background:#2e6aa5;"></div>
<div class="a" style="left:593.60px;top:165.22px;width:86.40px;height:10.30px;background:#2e6aa5;"></div>
<div class="t" style="left:19.20px;top:166.57px;font-size:8.8px;line-height:8.8px;transform:scaleX(0.8070);">2492</div>
<div class="t" style="left:39.60px;top:166.57px;font-size:8.8px;line-height:8.8px;transform:scaleX(0.8070);">2428</div>
<div class="t" style="left:69.05px;top:166.57px;font-size:8.8px;line-height:8.8px;transform:scaleX(0.8070);">1</div>
<div class="t" style="left:77.60px;top:166.57px;font-size:8.8px;line-height:8.8px;transform:scaleX(0.8070);">2012</div>
<div class="t" style="left:96.60px;top:166.57px;font-size:8.8px;line-height:8.8px;transform:scaleX(0.7920);">Enna</div>
<div class="t" style="left:153.80px;top:166.57px;font-size:8.8px;line-height:8.8px;transform:scaleX(0.7920);">Iazmel</div>
<div class="t" style="left:211.00px;top:166.57px;font-size:8.8px;line-height:8.8px;transform:scaleX(0.8070);">24.01.1995</div>
<div class="t" style="left:264.60px;top:166.57px;font-size:8.8px;line-height:8.8px;transform:scaleX(0.8070);">09.06.2022</div>
<div class="t" style="left:304.90px;top:166.57px;font-size:8.8px;line-height:8.8px;transform:scaleX(0.8070);">15.06.2022</div>
<div class="t" style="left:344.80px;top:166.57px;font-size:8.8px;line-height:8.8px;transform:scaleX(0.8070);">17.12.2023</div>
<div class="t" style="left:405.70px;top:166.57px;font-size:8.8px;line-height:8.8px;transform:scaleX(0.8070);">18.08.2022</div>
<div class="t" style="left:543.45px;top:166.57px;font-size:8.8px;line-height:8.8px;transform:scaleX(0.8070);color:#dde6f1;">3</div>
<div class="t" style="left:673.65px;top:166.57px;font-size:8.8px;line-height:8.8px;transform:scaleX(0.8070);color:#dde6f1;">1</div>
<div class="t" style="left:744.80px;top:166.57px;font-size:8.8px;line-height:8.8px;transform:scaleX(0.7920);">TECHNIKER KRANKENKASSE</div>
<div class="t" style="left:940.45px;top:166.57px;font-size:8.8px;line-height:8.8px;transform:scaleX(0.8070);">105077504</div>
<div class="t" style="left:980.45px;top:166.57px;font-size:8.8px;line-height:8.8px;transform:scaleX(0.8070);">441612217</div>
<div class="a" style="left:522.60px;top:175.51px;width:26.40px;height:10.30px;background:#2e6aa5;"></div>
<div class="a" style="left:593.60px;top:175.51px;width:86.40px;height:10.30px;background:#2e6aa5;"></div>
<div class="t" style="left:19.20px;top:176.86px;font-size:8.8px;line-height:8.8px;transform:scaleX(0.8070);">2495</div>
<div class="t" style="left:39.60px;top:176.86px;font-size:8.8px;line-height:8.8px;transform:scaleX(0.8070);">2431</div>
<div class="t" style="left:69.05px;top:176.86px;font-size:8.8px;line-height:8.8px;transform:scaleX(0.8070);">1</div>
<div class="t" style="left:77.60px;top:176.86px;font-size:8.8px;line-height:8.8px;transform:scaleX(0.8070);">2015</div>
<div class="t" style="left:96.60px;top:176.86px;font-size:8.8px;line-height:8.8px;transform:scaleX(0.7920);">Hennaila</div>
<div class="t" style="left:153.80px;top:176.86px;font-size:8.8px;line-height:8.8px;transform:scaleX(0.7920);">Zeum</div>
<div class="t" style="left:211.00px;top:176.86px;font-size:8.8px;line-height:8.8px;transform:scaleX(0.8070);">06.08.1956</div>
<div class="t" style="left:264.60px;top:176.86px;font-size:8.8px;line-height:8.8px;transform:scaleX(0.8070);">21.03.2022</div>
<div class="t" style="left:304.90px;top:176.86px;font-size:8.8px;line-height:8.8px;transform:scaleX(0.8070);">21.03.2022</div>
<div class="t" style="left:344.80px;top:176.86px;font-size:8.8px;line-height:8.8px;transform:scaleX(0.8070);">17.09.2023</div>
<div class="t" style="left:405.70px;top:176.86px;font-size:8.8px;line-height:8.8px;transform:scaleX(0.8070);">17.07.2023</div>
<div class="t" style="left:479.46px;top:176.86px;font-size:8.8px;line-height:8.8px;transform:scaleX(0.8070);">17.09.2023</div>
<div class="t" style="left:539.50px;top:176.86px;font-size:8.8px;line-height:8.8px;transform:scaleX(0.8070);color:#dde6f1;">40</div>
<div class="t" style="left:673.65px;top:176.86px;font-size:8.8px;line-height:8.8px;transform:scaleX(0.8070);color:#dde6f1;">1</div>
<div class="t" style="left:980.45px;top:176.86px;font-size:8.8px;line-height:8.8px;transform:scaleX(0.8070);">441612217</div>
<div class="a" style="left:522.60px;top:185.81px;width:26.40px;height:10.30px;background:#2e6aa5;"></div>
<div class="a" style="left:593.60px;top:185.81px;width:86.40px;height:10.30px;background:#2e6aa5;"></div>
<div class="t" style="left:19.20px;top:187.16px;font-size:8.8px;line-height:8.8px;transform:scaleX(0.8070);">2496</div>
<div class="t" style="left:40.13px;top:187.16px;font-size:8.8px;line-height:8.8px;transform:scaleX(0.8070);">1145</div>
<div class="t" style="left:69.05px;top:187.16px;font-size:8.8px;line-height:8.8px;transform:scaleX(0.8070);">4</div>
<div class="t" style="left:77.60px;top:187.16px;font-size:8.8px;line-height:8.8px;transform:scaleX(0.8070);">1032</div>
<div class="t" style="left:96.60px;top:187.16px;font-size:8.8px;line-height:8.8px;transform:scaleX(0.7920);">Wlenp</div>
<div class="t" style="left:153.80px;top:187.16px;font-size:8.8px;line-height:8.8px;transform:scaleX(0.7920);">Maolhelg</div>
<div class="t" style="left:211.00px;top:187.16px;font-size:8.8px;line-height:8.8px;transform:scaleX(0.8070);">21.12.1951</div>
<div class="t" style="left:264.60px;top:187.16px;font-size:8.8px;line-height:8.8px;transform:scaleX(0.8070);">20.06.2022</div>
<div class="t" style="left:304.90px;top:187.16px;font-size:8.8px;line-height:8.8px;transform:scaleX(0.8070);">20.06.2022</div>
<div class="t" style="left:405.70px;top:187.16px;font-size:8.8px;line-height:8.8px;transform:scaleX(0.8070);">19.07.2023</div>
<div class="t" style="left:539.50px;top:187.16px;font-size:8.8px;line-height:8.8px;transform:scaleX(0.8070);color:#dde6f1;">36</div>
<div class="t" style="left:669.70px;top:187.16px;font-size:8.8px;line-height:8.8px;transform:scaleX(0.8070);color:#dde6f1;">30</div>
<div class="t" style="left:744.80px;top:187.16px;font-size:8.8px;line-height:8.8px;transform:scaleX(0.7920);">TECHNIKER KRANKENKASSE</div>
<div class="t" style="left:940.45px;top:187.16px;font-size:8.8px;line-height:8.8px;transform:scaleX(0.8070);">105077504</div>
<div class="t" style="left:980.45px;top:187.16px;font-size:8.8px;line-height:8.8px;transform:scaleX(0.8070);">441612217</div>
<div class="a" style="left:522.60px;top:196.10px;width:26.40px;height:10.30px;background:#2e6aa5;"></div>
<div class="a" style="left:593.60px;top:196.10px;width:86.40px;height:10.30px;background:#2e6aa5;"></div>
<div class="t" style="left:19.20px;top:197.45px;font-size:8.8px;line-height:8.8px;transform:scaleX(0.8070);">2497</div>
<div class="t" style="left:40.13px;top:197.45px;font-size:8.8px;line-height:8.8px;transform:scaleX(0.8070);">1144</div>
<div class="t" style="left:69.05px;top:197.45px;font-size:8.8px;line-height:8.8px;transform:scaleX(0.8070);">4</div>
<div class="t" style="left:77.60px;top:197.45px;font-size:8.8px;line-height:8.8px;transform:scaleX(0.8070);">1031</div>
<div class="t" style="left:96.60px;top:197.45px;font-size:8.8px;line-height:8.8px;transform:scaleX(0.7920);">Ladone</div>
<div class="t" style="left:153.80px;top:197.45px;font-size:8.8px;line-height:8.8px;transform:scaleX(0.7920);">Maolhelq</div>
<div class="t" style="left:211.00px;top:197.45px;font-size:8.8px;line-height:8.8px;transform:scaleX(0.8070);">05.02.1953</div>
<div class="t" style="left:264.60px;top:197.45px;font-size:8.8px;line-height:8.8px;transform:scaleX(0.8070);">20.06.2022</div>
<div class="t" style="left:304.90px;top:197.45px;font-size:8.8px;line-height:8.8px;transform:scaleX(0.8070);">20.06.2022</div>
<div class="t" style="left:405.70px;top:197.45px;font-size:8.8px;line-height:8.8px;transform:scaleX(0.8070);">26.07.2023</div>
<div class="t" style="left:539.50px;top:197.45px;font-size:8.8px;line-height:8.8px;transform:scaleX(0.8070);color:#dde6f1;">38</div>
<div class="t" style="left:669.70px;top:197.45px;font-size:8.8px;line-height:8.8px;transform:scaleX(0.8070);color:#dde6f1;">30</div>
<div class="t" style="left:744.80px;top:197.45px;font-size:8.8px;line-height:8.8px;transform:scaleX(0.7920);">TECHNIKER KRANKENKASSE</div>
<div class="t" style="left:940.45px;top:197.45px;font-size:8.8px;line-height:8.8px;transform:scaleX(0.8070);">105077504</div>
<div class="t" style="left:980.45px;top:197.45px;font-size:8.8px;line-height:8.8px;transform:scaleX(0.8070);">441612217</div>
<div class="t" style="left:19.73px;top:207.74px;font-size:8.8px;line-height:8.8px;transform:scaleX(0.8070);">2511</div>
<div class="t" style="left:39.60px;top:207.74px;font-size:8.8px;line-height:8.8px;transform:scaleX(0.8070);">2446</div>
<div class="t" style="left:69.05px;top:207.74px;font-size:8.8px;line-height:8.8px;transform:scaleX(0.8070);">1</div>
<div class="t" style="left:77.60px;top:207.74px;font-size:8.8px;line-height:8.8px;transform:scaleX(0.8070);">2025</div>
<div class="t" style="left:96.60px;top:207.74px;font-size:8.8px;line-height:8.8px;transform:scaleX(0.7920);">Endarope</div>
<div class="t" style="left:153.80px;top:207.74px;font-size:8.8px;line-height:8.8px;transform:scaleX(0.7920);">Mrnica</div>
<div class="t" style="left:211.00px;top:207.74px;font-size:8.8px;line-height:8.8px;transform:scaleX(0.8070);">28.03.1957</div>
<div class="t" style="left:264.60px;top:207.74px;font-size:8.8px;line-height:8.8px;transform:scaleX(0.8070);">07.04.2022</div>
<div class="t" style="left:304.90px;top:207.74px;font-size:8.8px;line-height:8.8px;transform:scaleX(0.8070);">21.06.2022</div>
<div class="t" style="left:344.80px;top:207.74px;font-size:8.8px;line-height:8.8px;transform:scaleX(0.8070);">28.06.2025</div>
<div class="t" style="left:405.70px;top:207.74px;font-size:8.8px;line-height:8.8px;transform:scaleX(0.8070);">12.07.2023</div>
<div class="t" style="left:479.46px;top:207.74px;font-size:8.8px;line-height:8.8px;transform:scaleX(0.8070);">28.06.2025</div>
<div class="t" style="left:539.50px;top:207.74px;font-size:8.8px;line-height:8.8px;transform:scaleX(0.8070);">19</div>
<div class="t" style="left:744.80px;top:207.74px;font-size:8.8px;line-height:8.8px;transform:scaleX(0.7920);">BARMER</div>
<div class="t" style="left:940.45px;top:207.74px;font-size:8.8px;line-height:8.8px;transform:scaleX(0.8070);">105080008</div>
<div class="t" style="left:980.45px;top:207.74px;font-size:8.8px;line-height:8.8px;transform:scaleX(0.8070);">441612217</div>
<div class="a" style="left:522.60px;top:216.68px;width:26.40px;height:10.30px;background:#2e6aa5;"></div>
<div class="a" style="left:593.60px;top:216.68px;width:86.40px;height:10.30px;background:#2e6aa5;"></div>
<div class="t" style="left:19.20px;top:218.03px;font-size:8.8px;line-height:8.8px;transform:scaleX(0.8070);">2518</div>
<div class="t" style="left:39.60px;top:218.03px;font-size:8.8px;line-height:8.8px;transform:scaleX(0.8070);">2452</div>
<div class="t" style="left:69.05px;top:218.03px;font-size:8.8px;line-height:8.8px;transform:scaleX(0.8070);">1</div>
<div class="t" style="left:77.60px;top:218.03px;font-size:8.8px;line-height:8.8px;transform:scaleX(0.8070);">2028</div>
<div class="t" style="left:96.60px;top:218.03px;font-size:8.8px;line-height:8.8px;transform:scaleX(0.7920);">Zebzele</div>
<div class="t" style="left:153.80px;top:218.03px;font-size:8.8px;line-height:8.8px;transform:scaleX(0.7920);">Zacpal</div>
<div class="t" style="left:211.00px;top:218.03px;font-size:8.8px;line-height:8.8px;transform:scaleX(0.8070);">14.09.1949</div>
<div class="t" style="left:264.60px;top:218.03px;font-size:8.8px;line-height:8.8px;transform:scaleX(0.8070);">17.06.2022</div>
<div class="t" style="left:304.90px;top:218.03px;font-size:8.8px;line-height:8.8px;transform:scaleX(0.8070);">17.06.2022</div>
<div class="t" style="left:344.80px;top:218.03px;font-size:8.8px;line-height:8.8px;transform:scaleX(0.8070);">03.01.2024</div>
<div class="t" style="left:405.70px;top:218.03px;font-size:8.8px;line-height:8.8px;transform:scaleX(0.8070);">17.07.2023</div>
<div class="t" style="left:479.46px;top:218.03px;font-size:8.8px;line-height:8.8px;transform:scaleX(0.8070);">03.01.2024</div>
<div class="t" style="left:539.50px;top:218.03px;font-size:8.8px;line-height:8.8px;transform:scaleX(0.8070);color:#dde6f1;">22</div>
<div class="t" style="left:673.65px;top:218.03px;font-size:8.8px;line-height:8.8px;transform:scaleX(0.8070);color:#dde6f1;">1</div>
<div class="t" style="left:744.80px;top:218.03px;font-size:8.8px;line-height:8.8px;transform:scaleX(0.7920);">BARMER</div>
<div class="t" style="left:940.45px;top:218.03px;font-size:8.8px;line-height:8.8px;transform:scaleX(0.8070);">105080008</div>
<div class="t" style="left:980.45px;top:218.03px;font-size:8.8px;line-height:8.8px;transform:scaleX(0.8070);">441612217</div>
<div class="a" style="left:522.60px;top:226.97px;width:26.40px;height:10.30px;background:#2e6aa5;"></div>
<div class="a" style="left:593.60px;top:226.97px;width:86.40px;height:10.30px;background:#2e6aa5;"></div>
<div class="t" style="left:19.20px;top:228.32px;font-size:8.8px;line-height:8.8px;transform:scaleX(0.8070);">2524</div>
<div class="t" style="left:39.60px;top:228.32px;font-size:8.8px;line-height:8.8px;transform:scaleX(0.8070);">1680</div>
<div class="t" style="left:69.05px;top:228.32px;font-size:8.8px;line-height:8.8px;transform:scaleX(0.8070);">2</div>
<div class="t" style="left:77.60px;top:228.32px;font-size:8.8px;line-height:8.8px;transform:scaleX(0.8070);">1453</div>
<div class="t" style="left:96.60px;top:228.32px;font-size:8.8px;line-height:8.8px;transform:scaleX(0.7920);">Kanle</div>
<div class="t" style="left:153.80px;top:228.32px;font-size:8.8px;line-height:8.8px;transform:scaleX(0.7920);">Dutpalmett</div>
<div class="t" style="left:211.00px;top:228.32px;font-size:8.8px;line-height:8.8px;transform:scaleX(0.8070);">21.03.1955</div>
<div class="t" style="left:264.60px;top:228.32px;font-size:8.8px;line-height:8.8px;transform:scaleX(0.8070);">14.06.2022</div>
<div class="t" style="left:304.90px;top:228.32px;font-size:8.8px;line-height:8.8px;transform:scaleX(0.8070);">29.06.2022</div>
<div class="t" style="left:344.80px;top:228.32px;font-size:8.8px;line-height:8.8px;transform:scaleX(0.8070);">31.12.2023</div>
<div class="t" style="left:405.70px;top:228.32px;font-size:8.8px;line-height:8.8px;transform:scaleX(0.8070);">17.07.2023</div>
<div class="t" style="left:479.46px;top:228.32px;font-size:8.8px;line-height:8.8px;transform:scaleX(0.8070);">31.12.2023</div>
<div class="t" style="left:539.50px;top:228.32px;font-size:8.8px;line-height:8.8px;transform:scaleX(0.8070);color:#dde6f1;">35</div>
<div class="t" style="left:673.65px;top:228.32px;font-size:8.8px;line-height:8.8px;transform:scaleX(0.8070);color:#dde6f1;">1</div>
<div class="t" style="left:744.80px;top:228.32px;font-size:8.8px;line-height:8.8px;transform:scaleX(0.7920);">BARMER</div>
<div class="t" style="left:940.45px;top:228.32px;font-size:8.8px;line-height:8.8px;transform:scaleX(0.8070);">105080008</div>
<div class="t" style="left:980.45px;top:228.32px;font-size:8.8px;line-height:8.8px;transform:scaleX(0.8070);">441612217</div>
<div class="a" style="left:522.60px;top:237.27px;width:26.40px;height:10.30px;background:#2e6aa5;"></div>
<div class="a" style="left:593.60px;top:237.27px;width:86.40px;height:10.30px;background:#2e6aa5;"></div>
<div class="t" style="left:19.20px;top:238.62px;font-size:8.8px;line-height:8.8px;transform:scaleX(0.8070);">2532</div>
<div class="t" style="left:39.60px;top:238.62px;font-size:8.8px;line-height:8.8px;transform:scaleX(0.8070);">2472</div>
<div class="t" style="left:69.05px;top:238.62px;font-size:8.8px;line-height:8.8px;transform:scaleX(0.8070);">1</div>
<div class="t" style="left:77.60px;top:238.62px;font-size:8.8px;line-height:8.8px;transform:scaleX(0.8070);">1762</div>
<div class="t" style="left:96.60px;top:238.62px;font-size:8.8px;line-height:8.8px;transform:scaleX(0.7920);">Lesine</div>
<div class="t" style="left:153.80px;top:238.62px;font-size:8.8px;line-height:8.8px;transform:scaleX(0.7920);">Linn</div>
<div class="t" style="left:211.00px;top:238.62px;font-size:8.8px;line-height:8.8px;transform:scaleX(0.8070);">01.01.1965</div>
<div class="t" style="left:264.60px;top:238.62px;font-size:8.8px;line-height:8.8px;transform:scaleX(0.8070);">20.06.2022</div>
<div class="t" style="left:304.90px;top:238.62px;font-size:8.8px;line-height:8.8px;transform:scaleX(0.8070);">27.06.2022</div>
<div class="t" style="left:344.80px;top:238.62px;font-size:8.8px;line-height:8.8px;transform:scaleX(0.8070);">31.12.2023</div>
<div class="t" style="left:405.70px;top:238.62px;font-size:8.8px;line-height:8.8px;transform:scaleX(0.8070);">21.06.2023</div>
<div class="t" style="left:479.46px;top:238.62px;font-size:8.8px;line-height:8.8px;transform:scaleX(0.8070);">31.12.2023</div>
<div class="t" style="left:539.50px;top:238.62px;font-size:8.8px;line-height:8.8px;transform:scaleX(0.8070);color:#dde6f1;">27</div>
<div class="t" style="left:673.65px;top:238.62px;font-size:8.8px;line-height:8.8px;transform:scaleX(0.8070);color:#dde6f1;">1</div>
<div class="t" style="left:744.80px;top:238.62px;font-size:8.8px;line-height:8.8px;transform:scaleX(0.7920);">TBK Thüringer BKK</div>
<div class="t" style="left:940.45px;top:238.62px;font-size:8.8px;line-height:8.8px;transform:scaleX(0.8070);">105928809</div>
<div class="t" style="left:980.45px;top:238.62px;font-size:8.8px;line-height:8.8px;transform:scaleX(0.8070);">441612217</div>
<div class="a" style="left:522.60px;top:247.56px;width:26.40px;height:10.30px;background:#2e6aa5;"></div>
<div class="a" style="left:593.60px;top:247.56px;width:86.40px;height:10.30px;background:#2e6aa5;"></div>
<div class="t" style="left:19.20px;top:248.91px;font-size:8.8px;line-height:8.8px;transform:scaleX(0.8070);">2533</div>
<div class="t" style="left:39.60px;top:248.91px;font-size:8.8px;line-height:8.8px;transform:scaleX(0.8070);">2474</div>
<div class="t" style="left:69.05px;top:248.91px;font-size:8.8px;line-height:8.8px;transform:scaleX(0.8070);">1</div>
<div class="t" style="left:77.60px;top:248.91px;font-size:8.8px;line-height:8.8px;transform:scaleX(0.8070);">2039</div>
<div class="t" style="left:96.60px;top:248.91px;font-size:8.8px;line-height:8.8px;transform:scaleX(0.7920);">Megap</div>
<div class="t" style="left:153.80px;top:248.91px;font-size:8.8px;line-height:8.8px;transform:scaleX(0.7920);">Efeg</div>
<div class="t" style="left:211.00px;top:248.91px;font-size:8.8px;line-height:8.8px;transform:scaleX(0.8070);">08.10.2000</div>
<div class="t" style="left:264.60px;top:248.91px;font-size:8.8px;line-height:8.8px;transform:scaleX(0.8070);">27.06.2022</div>
<div class="t" style="left:304.90px;top:248.91px;font-size:8.8px;line-height:8.8px;transform:scaleX(0.8070);">04.07.2022</div>
<div class="t" style="left:344.80px;top:248.91px;font-size:8.8px;line-height:8.8px;transform:scaleX(0.8070);">07.01.2024</div>
<div class="t" style="left:405.70px;top:248.91px;font-size:8.8px;line-height:8.8px;transform:scaleX(0.8070);">06.03.2023</div>
<div class="t" style="left:479.46px;top:248.91px;font-size:8.8px;line-height:8.8px;transform:scaleX(0.8070);">07.01.2024</div>
<div class="t" style="left:539.50px;top:248.91px;font-size:8.8px;line-height:8.8px;transform:scaleX(0.8070);color:#dde6f1;">21</div>
<div class="t" style="left:673.65px;top:248.91px;font-size:8.8px;line-height:8.8px;transform:scaleX(0.8070);color:#dde6f1;">1</div>
<div class="t" style="left:744.80px;top:248.91px;font-size:8.8px;line-height:8.8px;transform:scaleX(0.7920);">AOK Plus</div>
<div class="t" style="left:940.45px;top:248.91px;font-size:8.8px;line-height:8.8px;transform:scaleX(0.8070);">105998018</div>
<div class="t" style="left:980.45px;top:248.91px;font-size:8.8px;line-height:8.8px;transform:scaleX(0.8070);">441612217</div>
<div class="a" style="left:522.60px;top:257.85px;width:26.40px;height:10.30px;background:#2e6aa5;"></div>
<div class="a" style="left:593.60px;top:257.85px;width:86.40px;height:10.30px;background:#2e6aa5;"></div>
<div class="t" style="left:19.20px;top:259.20px;font-size:8.8px;line-height:8.8px;transform:scale(0.8070,0.8);">2538</div>
<div class="t" style="left:39.60px;top:259.20px;font-size:8.8px;line-height:8.8px;transform:scale(0.8070,0.8);">2478</div>
<div class="t" style="left:69.05px;top:259.20px;font-size:8.8px;line-height:8.8px;transform:scale(0.8070,0.8);">1</div>
<div class="t" style="left:77.60px;top:259.20px;font-size:8.8px;line-height:8.8px;transform:scale(0.8070,0.8);">2042</div>
<div class="t" style="left:96.60px;top:259.20px;font-size:8.8px;line-height:8.8px;transform:scale(0.7920,0.8);">Selnin</div>
<div class="t" style="left:153.80px;top:259.20px;font-size:8.8px;line-height:8.8px;transform:scale(0.7920,0.8);">Zenha</div>
<div class="t" style="left:211.00px;top:259.20px;font-size:8.8px;line-height:8.8px;transform:scale(0.8070,0.8);">18.06.1990</div>
<div class="t" style="left:264.60px;top:259.20px;font-size:8.8px;line-height:8.8px;transform:scale(0.8070,0.8);">16.05.2022</div>
<div class="t" style="left:304.90px;top:259.20px;font-size:8.8px;line-height:8.8px;transform:scale(0.8070,0.8);">27.05.2022</div>
<div class="t" style="left:344.80px;top:259.20px;font-size:8.8px;line-height:8.8px;transform:scale(0.8070,0.8);">24.12.2023</div>
<div class="t" style="left:405.70px;top:259.20px;font-size:8.8px;line-height:8.8px;transform:scale(0.8070,0.8);">12.07.2023</div>
<div class="t" style="left:479.46px;top:259.20px;font-size:8.8px;line-height:8.8px;transform:scale(0.8070,0.8);">24.12.2023</div>
<div class="t" style="left:539.50px;top:259.20px;font-size:8.8px;line-height:8.8px;transform:scale(0.8070,0.8);color:#dde6f1;">22</div>
<div class="t" style="left:673.65px;top:259.20px;font-size:8.8px;line-height:8.8px;transform:scale(0.8070,0.8);color:#dde6f1;">1</div>
<div class="t" style="left:744.80px;top:259.20px;font-size:8.8px;line-height:8.8px;transform:scale(0.7920,0.8);">Knappschaft Thüringen</div>
<div class="t" style="left:940.45px;top:259.20px;font-size:8.8px;line-height:8.8px;transform:scale(0.8070,0.8);">105006008</div>
<div class="t" style="left:980.45px;top:259.20px;font-size:8.8px;line-height:8.8px;transform:scale(0.8070,0.8);">441612217</div>
<div class="a" style="left:522.60px;top:268.14px;width:26.40px;height:10.30px;background:#2e6aa5;"></div>
<div class="a" style="left:593.60px;top:268.14px;width:86.40px;height:10.30px;background:#2e6aa5;"></div>
<div class="t" style="left:19.20px;top:269.49px;font-size:8.8px;line-height:8.8px;transform:scaleX(0.8070);">2539</div>
<div class="t" style="left:39.60px;top:269.49px;font-size:8.8px;line-height:8.8px;transform:scaleX(0.8070);">2479</div>
<div class="t" style="left:69.05px;top:269.49px;font-size:8.8px;line-height:8.8px;transform:scaleX(0.8070);">1</div>
<div class="t" style="left:77.60px;top:269.49px;font-size:8.8px;line-height:8.8px;transform:scaleX(0.8070);">2043</div>
<div class="t" style="left:96.60px;top:269.49px;font-size:8.8px;line-height:8.8px;transform:scaleX(0.7920);">Mumenna</div>
<div class="t" style="left:153.80px;top:269.49px;font-size:8.8px;line-height:8.8px;transform:scaleX(0.7920);">Peuwmel</div>
<div class="t" style="left:211.00px;top:269.49px;font-size:8.8px;line-height:8.8px;transform:scaleX(0.8070);">26.12.1988</div>
<div class="t" style="left:264.60px;top:269.49px;font-size:8.8px;line-height:8.8px;transform:scaleX(0.8070);">15.06.2022</div>
<div class="t" style="left:304.90px;top:269.49px;font-size:8.8px;line-height:8.8px;transform:scaleX(0.8070);">20.06.2022</div>
<div class="t" style="left:344.80px;top:269.49px;font-size:8.8px;line-height:8.8px;transform:scaleX(0.8070);">17.12.2023</div>
<div class="t" style="left:405.70px;top:269.49px;font-size:8.8px;line-height:8.8px;transform:scaleX(0.8070);">20.07.2023</div>
<div class="t" style="left:479.46px;top:269.49px;font-size:8.8px;line-height:8.8px;transform:scaleX(0.8070);">17.12.2023</div>
<div class="t" style="left:539.50px;top:269.49px;font-size:8.8px;line-height:8.8px;transform:scaleX(0.8070);color:#dde6f1;">29</div>
<div class="t" style="left:673.65px;top:269.49px;font-size:8.8px;line-height:8.8px;transform:scaleX(0.8070);color:#dde6f1;">1</div>
<div class="t" style="left:744.80px;top:269.49px;font-size:8.8px;line-height:8.8px;transform:scaleX(0.7920);">IKK Classic (Ost)</div>
<div class="t" style="left:940.45px;top:269.49px;font-size:8.8px;line-height:8.8px;transform:scaleX(0.8070);">107202793</div>
<div class="t" style="left:980.45px;top:269.49px;font-size:8.8px;line-height:8.8px;transform:scaleX(0.8070);">441612217</div>
<div class="a" style="left:522.60px;top:278.43px;width:26.40px;height:10.30px;background:#2e6aa5;"></div>
<div class="a" style="left:593.60px;top:278.43px;width:86.40px;height:10.30px;background:#2e6aa5;"></div>
<div class="t" style="left:19.20px;top:279.78px;font-size:8.8px;line-height:8.8px;transform:scaleX(0.8070);">2542</div>
<div class="t" style="left:39.60px;top:279.78px;font-size:8.8px;line-height:8.8px;transform:scaleX(0.8070);">2482</div>
<div class="t" style="left:69.05px;top:279.78px;font-size:8.8px;line-height:8.8px;transform:scaleX(0.8070);">1</div>
<div class="t" style="left:77.60px;top:279.78px;font-size:8.8px;line-height:8.8px;transform:scaleX(0.8070);">2046</div>
<div class="t" style="left:96.60px;top:279.78px;font-size:8.8px;line-height:8.8px;transform:scaleX(0.7920);">Laosel</div>
<div class="t" style="left:153.80px;top:279.78px;font-size:8.8px;line-height:8.8px;transform:scaleX(0.7920);">Zacpal</div>
<div class="t" style="left:211.00px;top:279.78px;font-size:8.8px;line-height:8.8px;transform:scaleX(0.8070);">06.06.1945</div>
<div class="t" style="left:264.60px;top:279.78px;font-size:8.8px;line-height:8.8px;transform:scaleX(0.8070);">01.07.2022</div>
<div class="t" style="left:304.90px;top:279.78px;font-size:8.8px;line-height:8.8px;transform:scaleX(0.8070);">01.07.2022</div>
<div class="t" style="left:344.80px;top:279.78px;font-size:8.8px;line-height:8.8px;transform:scaleX(0.8070);">03.01.2024</div>
<div class="t" style="left:405.70px;top:279.78px;font-size:8.8px;line-height:8.8px;transform:scaleX(0.8070);">17.07.2023</div>
<div class="t" style="left:479.46px;top:279.78px;font-size:8.8px;line-height:8.8px;transform:scaleX(0.8070);">03.01.2024</div>
<div class="t" style="left:539.50px;top:279.78px;font-size:8.8px;line-height:8.8px;transform:scaleX(0.8070);color:#dde6f1;">23</div>
<div class="t" style="left:673.65px;top:279.78px;font-size:8.8px;line-height:8.8px;transform:scaleX(0.8070);color:#dde6f1;">1</div>
<div class="t" style="left:744.80px;top:279.78px;font-size:8.8px;line-height:8.8px;transform:scaleX(0.7920);">BARMER</div>
<div class="t" style="left:940.45px;top:279.78px;font-size:8.8px;line-height:8.8px;transform:scaleX(0.8070);">105080008</div>
<div class="t" style="left:980.45px;top:279.78px;font-size:8.8px;line-height:8.8px;transform:scaleX(0.8070);">441612217</div>
<div class="a" style="left:522.60px;top:288.73px;width:26.40px;height:10.30px;background:#2e6aa5;"></div>
<div class="a" style="left:593.60px;top:288.73px;width:86.40px;height:10.30px;background:#2e6aa5;"></div>
<div class="t" style="left:19.20px;top:290.08px;font-size:8.8px;line-height:8.8px;transform:scale(0.8070,0.8);">2543</div>
<div class="t" style="left:39.60px;top:290.08px;font-size:8.8px;line-height:8.8px;transform:scale(0.8070,0.8);">2483</div>
<div class="t" style="left:69.05px;top:290.08px;font-size:8.8px;line-height:8.8px;transform:scale(0.8070,0.8);">1</div>
<div class="t" style="left:77.60px;top:290.08px;font-size:8.8px;line-height:8.8px;transform:scale(0.8070,0.8);">1400</div>
<div class="t" style="left:96.60px;top:290.08px;font-size:8.8px;line-height:8.8px;transform:scale(0.7920,0.8);">Gilom</div>
<div class="t" style="left:153.80px;top:290.08px;font-size:8.8px;line-height:8.8px;transform:scale(0.7920,0.8);">Nlimmel</div>
<div class="t" style="left:211.00px;top:290.08px;font-size:8.8px;line-height:8.8px;transform:scale(0.8070,0.8);">19.06.1957</div>
<div class="t" style="left:264.60px;top:290.08px;font-size:8.8px;line-height:8.8px;transform:scale(0.8070,0.8);">04.07.2022</div>
<div class="t" style="left:304.90px;top:290.08px;font-size:8.8px;line-height:8.8px;transform:scale(0.8070,0.8);">07.07.2022</div>
<div class="t" style="left:344.80px;top:290.08px;font-size:8.8px;line-height:8.8px;transform:scale(0.8070,0.8);">03.02.2024</div>
<div class="t" style="left:405.70px;top:290.08px;font-size:8.8px;line-height:8.8px;transform:scale(0.8070,0.8);">21.07.2023</div>
<div class="t" style="left:479.46px;top:290.08px;font-size:8.8px;line-height:8.8px;transform:scale(0.8070,0.8);">03.02.2024</div>
<div class="t" style="left:539.50px;top:290.08px;font-size:8.8px;line-height:8.8px;transform:scale(0.8070,0.8);color:#dde6f1;">28</div>
<div class="t" style="left:673.65px;top:290.08px;font-size:8.8px;line-height:8.8px;transform:scale(0.8070,0.8);color:#dde6f1;">1</div>
<div class="t" style="left:744.80px;top:290.08px;font-size:8.8px;line-height:8.8px;transform:scale(0.7920,0.8);">KKH</div>
<div class="t" style="left:940.45px;top:290.08px;font-size:8.8px;line-height:8.8px;transform:scale(0.8070,0.8);">102171012</div>
<div class="t" style="left:981.51px;top:290.08px;font-size:8.8px;line-height:8.8px;transform:scale(0.8070,0.8);">441112212</div>
<div class="a" style="left:522.60px;top:299.02px;width:26.40px;height:10.30px;background:#2e6aa5;"></div>
<div class="a" style="left:593.60px;top:299.02px;width:86.40px;height:10.30px;background:#2e6aa5;"></div>
<div class="t" style="left:19.20px;top:300.37px;font-size:8.8px;line-height:8.8px;transform:scaleX(0.8070);">2547</div>
<div class="t" style="left:39.60px;top:300.37px;font-size:8.8px;line-height:8.8px;transform:scaleX(0.8070);">2486</div>
<div class="t" style="left:69.05px;top:300.37px;font-size:8.8px;line-height:8.8px;transform:scaleX(0.8070);">1</div>
<div class="t" style="left:77.60px;top:300.37px;font-size:8.8px;line-height:8.8px;transform:scaleX(0.8070);">2049</div>
<div class="t" style="left:96.60px;top:300.37px;font-size:8.8px;line-height:8.8px;transform:scaleX(0.7920);">Echox</div>
<div class="t" style="left:153.80px;top:300.37px;font-size:8.8px;line-height:8.8px;transform:scaleX(0.7920);">Zacpal</div>
<div class="t" style="left:211.00px;top:300.37px;font-size:8.8px;line-height:8.8px;transform:scaleX(0.8070);">21.04.1942</div>
<div class="t" style="left:264.60px;top:300.37px;font-size:8.8px;line-height:8.8px;transform:scaleX(0.8070);">11.07.2022</div>
<div class="t" style="left:304.90px;top:300.37px;font-size:8.8px;line-height:8.8px;transform:scaleX(0.8070);">12.07.2022</div>
<div class="t" style="left:344.80px;top:300.37px;font-size:8.8px;line-height:8.8px;transform:scaleX(0.8070);">24.01.2024</div>
<div class="t" style="left:405.70px;top:300.37px;font-size:8.8px;line-height:8.8px;transform:scaleX(0.8070);">07.07.2023</div>
<div class="t" style="left:479.46px;top:300.37px;font-size:8.8px;line-height:8.8px;transform:scaleX(0.8070);">24.01.2024</div>
<div class="t" style="left:539.50px;top:300.37px;font-size:8.8px;line-height:8.8px;transform:scaleX(0.8070);color:#dde6f1;">32</div>
<div class="t" style="left:673.65px;top:300.37px;font-size:8.8px;line-height:8.8px;transform:scaleX(0.8070);color:#dde6f1;">1</div>
<div class="t" style="left:744.80px;top:300.37px;font-size:8.8px;line-height:8.8px;transform:scaleX(0.7920);">DAK Gesundheit</div>
<div class="t" style="left:940.45px;top:300.37px;font-size:8.8px;line-height:8.8px;transform:scaleX(0.8070);">105836717</div>
<div class="t" style="left:980.45px;top:300.37px;font-size:8.8px;line-height:8.8px;transform:scaleX(0.8070);">441612217</div>
<div class="a" style="left:522.60px;top:309.31px;width:26.40px;height:10.30px;background:#2e6aa5;"></div>
<div class="a" style="left:593.60px;top:309.31px;width:86.40px;height:10.30px;background:#2e6aa5;"></div>
<div class="t" style="left:19.20px;top:310.66px;font-size:8.8px;line-height:8.8px;transform:scaleX(0.8070);">2552</div>
<div class="t" style="left:39.60px;top:310.66px;font-size:8.8px;line-height:8.8px;transform:scaleX(0.8070);">2489</div>
<div class="t" style="left:69.05px;top:310.66px;font-size:8.8px;line-height:8.8px;transform:scaleX(0.8070);">1</div>
<div class="t" style="left:77.60px;top:310.66px;font-size:8.8px;line-height:8.8px;transform:scaleX(0.8070);">2050</div>
<div class="t" style="left:96.60px;top:310.66px;font-size:8.8px;line-height:8.8px;transform:scaleX(0.7920);">Palmnon</div>
<div class="t" style="left:153.80px;top:310.66px;font-size:8.8px;line-height:8.8px;transform:scaleX(0.7920);">Dünnoch</div>
<div class="t" style="left:211.00px;top:310.66px;font-size:8.8px;line-height:8.8px;transform:scaleX(0.8070);">23.10.1967</div>
<div class="t" style="left:264.60px;top:310.66px;font-size:8.8px;line-height:8.8px;transform:scaleX(0.8070);">18.05.2022</div>
<div class="t" style="left:304.90px;top:310.66px;font-size:8.8px;line-height:8.8px;transform:scaleX(0.8070);">21.06.2022</div>
<div class="t" style="left:344.80px;top:310.66px;font-size:8.8px;line-height:8.8px;transform:scaleX(0.8070);">03.02.2024</div>
<div class="t" style="left:405.70px;top:310.66px;font-size:8.8px;line-height:8.8px;transform:scaleX(0.8070);">12.07.2023</div>
<div class="t" style="left:479.46px;top:310.66px;font-size:8.8px;line-height:8.8px;transform:scaleX(0.8070);">03.02.2024</div>
<div class="t" style="left:539.50px;top:310.66px;font-size:8.8px;line-height:8.8px;transform:scaleX(0.8070);color:#dde6f1;">24</div>
<div class="t" style="left:673.65px;top:310.66px;font-size:8.8px;line-height:8.8px;transform:scaleX(0.8070);color:#dde6f1;">1</div>
<div class="t" style="left:744.80px;top:310.66px;font-size:8.8px;line-height:8.8px;transform:scaleX(0.7920);">AOK Plus</div>
<div class="t" style="left:940.45px;top:310.66px;font-size:8.8px;line-height:8.8px;transform:scaleX(0.8070);">105998018</div>
<div class="t" style="left:980.45px;top:310.66px;font-size:8.8px;line-height:8.8px;transform:scaleX(0.8070);">441612217</div>
<div class="a" style="left:522.60px;top:319.60px;width:26.40px;height:10.30px;background:#2e6aa5;"></div>
<div class="a" style="left:593.60px;top:319.60px;width:86.40px;height:10.30px;background:#2e6aa5;"></div>
<div class="t" style="left:19.20px;top:320.95px;font-size:8.8px;line-height:8.8px;transform:scale(0.8070,0.8);">2558</div>
<div class="t" style="left:39.60px;top:320.95px;font-size:8.8px;line-height:8.8px;transform:scale(0.8070,0.8);">2495</div>
<div class="t" style="left:69.05px;top:320.95px;font-size:8.8px;line-height:8.8px;transform:scale(0.8070,0.8);">1</div>
<div class="t" style="left:77.60px;top:320.95px;font-size:8.8px;line-height:8.8px;transform:scale(0.8070,0.8);">2047</div>
<div class="t" style="left:96.60px;top:320.95px;font-size:8.8px;line-height:8.8px;transform:scale(0.7920,0.8);">Neeglun</div>
<div class="t" style="left:153.80px;top:320.95px;font-size:8.8px;line-height:8.8px;transform:scale(0.7920,0.8);">Mehaagel</div>
<div class="t" style="left:211.00px;top:320.95px;font-size:8.8px;line-height:8.8px;transform:scale(0.8070,0.8);">10.11.1973</div>
<div class="t" style="left:264.60px;top:320.95px;font-size:8.8px;line-height:8.8px;transform:scale(0.8070,0.8);">24.06.2022</div>
<div class="t" style="left:304.90px;top:320.95px;font-size:8.8px;line-height:8.8px;transform:scale(0.8070,0.8);">05.07.2022</div>
<div class="t" style="left:344.80px;top:320.95px;font-size:8.8px;line-height:8.8px;transform:scale(0.8070,0.8);">21.12.2023</div>
<div class="t" style="left:405.70px;top:320.95px;font-size:8.8px;line-height:8.8px;transform:scale(0.8070,0.8);">03.07.2023</div>
<div class="t" style="left:479.46px;top:320.95px;font-size:8.8px;line-height:8.8px;transform:scale(0.8070,0.8);">21.12.2023</div>
<div class="t" style="left:539.50px;top:320.95px;font-size:8.8px;line-height:8.8px;transform:scale(0.8070,0.8);color:#dde6f1;">20</div>
<div class="t" style="left:673.65px;top:320.95px;font-size:8.8px;line-height:8.8px;transform:scale(0.8070,0.8);color:#dde6f1;">1</div>
<div class="t" style="left:744.80px;top:320.95px;font-size:8.8px;line-height:8.8px;transform:scale(0.7920,0.8);">IKK Classic (Ost)</div>
<div class="t" style="left:940.45px;top:320.95px;font-size:8.8px;line-height:8.8px;transform:scale(0.8070,0.8);">107202793</div>
<div class="t" style="left:980.45px;top:320.95px;font-size:8.8px;line-height:8.8px;transform:scale(0.8070,0.8);">441612217</div>
<div class="a" style="left:522.60px;top:329.89px;width:26.40px;height:10.30px;background:#2e6aa5;"></div>
<div class="a" style="left:593.60px;top:329.89px;width:86.40px;height:10.30px;background:#2e6aa5;"></div>
<div class="t" style="left:19.20px;top:331.24px;font-size:8.8px;line-height:8.8px;transform:scaleX(0.8070);">2562</div>
<div class="t" style="left:39.60px;top:331.24px;font-size:8.8px;line-height:8.8px;transform:scaleX(0.8070);">2497</div>
<div class="t" style="left:69.05px;top:331.24px;font-size:8.8px;line-height:8.8px;transform:scaleX(0.8070);">1</div>
<div class="t" style="left:77.60px;top:331.24px;font-size:8.8px;line-height:8.8px;transform:scaleX(0.8070);">2054</div>
<div class="t" style="left:96.60px;top:331.24px;font-size:8.8px;line-height:8.8px;transform:scaleX(0.7920);">Gedsel</div>
<div class="t" style="left:153.80px;top:331.24px;font-size:8.8px;line-height:8.8px;transform:scaleX(0.7920);">Wloagloch</div>
<div class="t" style="left:211.00px;top:331.24px;font-size:8.8px;line-height:8.8px;transform:scaleX(0.8070);">28.05.1957</div>
<div class="t" style="left:264.60px;top:331.24px;font-size:8.8px;line-height:8.8px;transform:scaleX(0.8070);">12.07.2022</div>
<div class="t" style="left:304.90px;top:331.24px;font-size:8.8px;line-height:8.8px;transform:scaleX(0.8070);">13.07.2022</div>
<div class="t" style="left:344.80px;top:331.24px;font-size:8.8px;line-height:8.8px;transform:scaleX(0.8070);">08.01.2024</div>
<div class="t" style="left:405.70px;top:331.24px;font-size:8.8px;line-height:8.8px;transform:scaleX(0.8070);">12.06.2023</div>
<div class="t" style="left:479.46px;top:331.24px;font-size:8.8px;line-height:8.8px;transform:scaleX(0.8070);">03.01.2024</div>
<div class="t" style="left:540.03px;top:331.24px;font-size:8.8px;line-height:8.8px;transform:scaleX(0.8070);color:#dde6f1;">11</div>
<div class="t" style="left:673.65px;top:331.24px;font-size:8.8px;line-height:8.8px;transform:scaleX(0.8070);color:#dde6f1;">1</div>
<div class="t" style="left:744.80px;top:331.24px;font-size:8.8px;line-height:8.8px;transform:scaleX(0.7920);">IKK Classic (Ost)</div>
<div class="t" style="left:940.45px;top:331.24px;font-size:8.8px;line-height:8.8px;transform:scaleX(0.8070);">107202793</div>
<div class="t" style="left:980.45px;top:331.24px;font-size:8.8px;line-height:8.8px;transform:scaleX(0.8070);">441612217</div>
<div class="a" style="left:522.60px;top:340.19px;width:26.40px;height:10.30px;background:#2e6aa5;"></div>
<div class="a" style="left:593.60px;top:340.19px;width:86.40px;height:10.30px;background:#2e6aa5;"></div>
<div class="t" style="left:19.20px;top:341.54px;font-size:8.8px;line-height:8.8px;transform:scaleX(0.8070);">2563</div>
<div class="t" style="left:39.60px;top:341.54px;font-size:8.8px;line-height:8.8px;transform:scaleX(0.8070);">2498</div>
<div class="t" style="left:69.05px;top:341.54px;font-size:8.8px;line-height:8.8px;transform:scaleX(0.8070);">1</div>
<div class="t" style="left:77.60px;top:341.54px;font-size:8.8px;line-height:8.8px;transform:scaleX(0.8070);">2056</div>
<div class="t" style="left:96.60px;top:341.54px;font-size:8.8px;line-height:8.8px;transform:scaleX(0.7920);">Domare</div>
<div class="t" style="left:153.80px;top:341.54px;font-size:8.8px;line-height:8.8px;transform:scaleX(0.7920);">Mürral</div>
<div class="t" style="left:211.00px;top:341.54px;font-size:8.8px;line-height:8.8px;transform:scaleX(0.8070);">25.12.1956</div>
<div class="t" style="left:264.60px;top:341.54px;font-size:8.8px;line-height:8.8px;transform:scaleX(0.8070);">06.07.2022</div>
<div class="t" style="left:304.90px;top:341.54px;font-size:8.8px;line-height:8.8px;transform:scaleX(0.8070);">11.07.2022</div>
<div class="t" style="left:344.80px;top:341.54px;font-size:8.8px;line-height:8.8px;transform:scaleX(0.8070);">02.01.2024</div>
<div class="t" style="left:405.70px;top:341.54px;font-size:8.8px;line-height:8.8px;transform:scaleX(0.8070);">18.07.2023</div>
<div class="t" style="left:479.46px;top:341.54px;font-size:8.8px;line-height:8.8px;transform:scaleX(0.8070);">02.01.2024</div>
<div class="t" style="left:539.50px;top:341.54px;font-size:8.8px;line-height:8.8px;transform:scaleX(0.8070);color:#dde6f1;">21</div>
<div class="t" style="left:673.65px;top:341.54px;font-size:8.8px;line-height:8.8px;transform:scaleX(0.8070);color:#dde6f1;">1</div>
<div class="t" style="left:744.80px;top:341.54px;font-size:8.8px;line-height:8.8px;transform:scaleX(0.7920);">KKH</div>
<div class="t" style="left:940.45px;top:341.54px;font-size:8.8px;line-height:8.8px;transform:scaleX(0.8070);">105075502</div>
<div class="t" style="left:980.45px;top:341.54px;font-size:8.8px;line-height:8.8px;transform:scaleX(0.8070);">441612217</div>
<div class="a" style="left:476.00px;top:350.48px;width:47.00px;height:10.30px;background:#2e6aa5;"></div>
<div class="t" style="left:19.20px;top:351.83px;font-size:8.8px;line-height:8.8px;transform:scaleX(0.8070);">2567</div>
<div class="t" style="left:39.60px;top:351.83px;font-size:8.8px;line-height:8.8px;transform:scaleX(0.8070);">2502</div>
<div class="t" style="left:69.05px;top:351.83px;font-size:8.8px;line-height:8.8px;transform:scaleX(0.8070);">1</div>
<div class="t" style="left:77.60px;top:351.83px;font-size:8.8px;line-height:8.8px;transform:scaleX(0.8070);">2059</div>
<div class="t" style="left:96.60px;top:351.83px;font-size:8.8px;line-height:8.8px;transform:scaleX(0.7920);">Donne</div>
<div class="t" style="left:153.80px;top:351.83px;font-size:8.8px;line-height:8.8px;transform:scaleX(0.7920);">Dlißa</div>
<div class="t" style="left:211.00px;top:351.83px;font-size:8.8px;line-height:8.8px;transform:scaleX(0.8070);">13.08.1969</div>
<div class="t" style="left:264.60px;top:351.83px;font-size:8.8px;line-height:8.8px;transform:scaleX(0.8070);">09.06.2022</div>
<div class="t" style="left:304.90px;top:351.83px;font-size:8.8px;line-height:8.8px;transform:scaleX(0.8070);">30.06.2022</div>
<div class="t" style="left:344.80px;top:351.83px;font-size:8.8px;line-height:8.8px;transform:scaleX(0.8070);">06.12.2023</div>
<div class="t" style="left:479.46px;top:351.83px;font-size:8.8px;line-height:8.8px;transform:scaleX(0.8070);color:#dde6f1;">26.07.2022</div>
<div class="t" style="left:673.65px;top:351.83px;font-size:8.8px;line-height:8.8px;transform:scaleX(0.8070);">1</div>
<div class="t" style="left:744.80px;top:351.83px;font-size:8.8px;line-height:8.8px;transform:scaleX(0.7920);">IKK Classic (Ost)</div>
<div class="t" style="left:940.45px;top:351.83px;font-size:8.8px;line-height:8.8px;transform:scaleX(0.8070);">107202793</div>
<div class="t" style="left:980.45px;top:351.83px;font-size:8.8px;line-height:8.8px;transform:scaleX(0.8070);">441612217</div>
<div class="a" style="left:522.60px;top:360.77px;width:26.40px;height:10.30px;background:#2e6aa5;"></div>
<div class="a" style="left:593.60px;top:360.77px;width:86.40px;height:10.30px;background:#2e6aa5;"></div>
<div class="t" style="left:19.20px;top:362.12px;font-size:8.8px;line-height:8.8px;transform:scaleX(0.8070);">2570</div>
<div class="t" style="left:39.60px;top:362.12px;font-size:8.8px;line-height:8.8px;transform:scaleX(0.8070);">2506</div>
<div class="t" style="left:69.05px;top:362.12px;font-size:8.8px;line-height:8.8px;transform:scaleX(0.8070);">1</div>
<div class="t" style="left:77.60px;top:362.12px;font-size:8.8px;line-height:8.8px;transform:scaleX(0.8070);">2062</div>
<div class="t" style="left:96.60px;top:362.12px;font-size:8.8px;line-height:8.8px;transform:scaleX(0.7920);">Jaennanna</div>
<div class="t" style="left:153.80px;top:362.12px;font-size:8.8px;line-height:8.8px;transform:scaleX(0.7920);">Kokkod</div>
<div class="t" style="left:211.00px;top:362.12px;font-size:8.8px;line-height:8.8px;transform:scaleX(0.8070);">19.01.1969</div>
<div class="t" style="left:264.60px;top:362.12px;font-size:8.8px;line-height:8.8px;transform:scaleX(0.8070);">16.04.2022</div>
<div class="t" style="left:304.90px;top:362.12px;font-size:8.8px;line-height:8.8px;transform:scaleX(0.8070);">19.07.2022</div>
<div class="t" style="left:344.80px;top:362.12px;font-size:8.8px;line-height:8.8px;transform:scaleX(0.8070);">17.01.2024</div>
<div class="t" style="left:405.70px;top:362.12px;font-size:8.8px;line-height:8.8px;transform:scaleX(0.8070);">06.07.2023</div>
<div class="t" style="left:479.46px;top:362.12px;font-size:8.8px;line-height:8.8px;transform:scaleX(0.8070);">17.01.2024</div>
<div class="t" style="left:539.50px;top:362.12px;font-size:8.8px;line-height:8.8px;transform:scaleX(0.8070);color:#dde6f1;">20</div>
<div class="t" style="left:673.65px;top:362.12px;font-size:8.8px;line-height:8.8px;transform:scaleX(0.8070);color:#dde6f1;">1</div>
<div class="t" style="left:744.80px;top:362.12px;font-size:8.8px;line-height:8.8px;transform:scaleX(0.7920);">AOK Plus</div>
<div class="t" style="left:940.45px;top:362.12px;font-size:8.8px;line-height:8.8px;transform:scaleX(0.8070);">105998018</div>
<div class="t" style="left:980.45px;top:362.12px;font-size:8.8px;line-height:8.8px;transform:scaleX(0.8070);">441612217</div>
<div class="a" style="left:522.60px;top:371.06px;width:26.40px;height:10.30px;background:#2e6aa5;"></div>
<div class="a" style="left:593.60px;top:371.06px;width:86.40px;height:10.30px;background:#2e6aa5;"></div>
<div class="t" style="left:19.20px;top:372.41px;font-size:8.8px;line-height:8.8px;transform:scaleX(0.8070);">2572</div>
<div class="t" style="left:39.60px;top:372.41px;font-size:8.8px;line-height:8.8px;transform:scaleX(0.8070);">2508</div>
<div class="t" style="left:69.05px;top:372.41px;font-size:8.8px;line-height:8.8px;transform:scaleX(0.8070);">1</div>
<div class="t" style="left:77.60px;top:372.41px;font-size:8.8px;line-height:8.8px;transform:scaleX(0.8070);">2064</div>
<div class="t" style="left:96.60px;top:372.41px;font-size:8.8px;line-height:8.8px;transform:scaleX(0.7920);">Duglun</div>
<div class="t" style="left:153.80px;top:372.41px;font-size:8.8px;line-height:8.8px;transform:scaleX(0.7920);">Cumma</div>
<div class="t" style="left:211.00px;top:372.41px;font-size:8.8px;line-height:8.8px;transform:scaleX(0.8070);">02.07.1948</div>
<div class="t" style="left:264.60px;top:372.41px;font-size:8.8px;line-height:8.8px;transform:scaleX(0.8070);">05.07.2022</div>
<div class="t" style="left:304.90px;top:372.41px;font-size:8.8px;line-height:8.8px;transform:scaleX(0.8070);">15.07.2022</div>
<div class="t" style="left:344.80px;top:372.41px;font-size:8.8px;line-height:8.8px;transform:scaleX(0.8070);">21.02.2024</div>
<div class="t" style="left:405.70px;top:372.41px;font-size:8.8px;line-height:8.8px;transform:scaleX(0.8070);">23.06.2023</div>
<div class="t" style="left:479.46px;top:372.41px;font-size:8.8px;line-height:8.8px;transform:scaleX(0.8070);">21.02.2024</div>
<div class="t" style="left:539.50px;top:372.41px;font-size:8.8px;line-height:8.8px;transform:scaleX(0.8070);color:#dde6f1;">23</div>
<div class="t" style="left:673.65px;top:372.41px;font-size:8.8px;line-height:8.8px;transform:scaleX(0.8070);color:#dde6f1;">1</div>
<div class="t" style="left:744.80px;top:372.41px;font-size:8.8px;line-height:8.8px;transform:scaleX(0.7920);">TECHNIKER KRANKENKASSE</div>
<div class="t" style="left:940.45px;top:372.41px;font-size:8.8px;line-height:8.8px;transform:scaleX(0.8070);">105077504</div>
<div class="t" style="left:981.51px;top:372.41px;font-size:8.8px;line-height:8.8px;transform:scaleX(0.8070);">441112212</div>
<div class="a" style="left:522.60px;top:381.35px;width:26.40px;height:10.30px;background:#2e6aa5;"></div>
<div class="a" style="left:593.60px;top:381.35px;width:86.40px;height:10.30px;background:#2e6aa5;"></div>
<div class="t" style="left:19.20px;top:382.70px;font-size:8.8px;line-height:8.8px;transform:scale(0.8070,0.8);">2578</div>
<div class="t" style="left:39.60px;top:382.70px;font-size:8.8px;line-height:8.8px;transform:scale(0.8070,0.8);">2514</div>
<div class="t" style="left:69.05px;top:382.70px;font-size:8.8px;line-height:8.8px;transform:scale(0.8070,0.8);">1</div>
<div class="t" style="left:77.60px;top:382.70px;font-size:8.8px;line-height:8.8px;transform:scale(0.8070,0.8);">2000</div>
<div class="t" style="left:96.60px;top:382.70px;font-size:8.8px;line-height:8.8px;transform:scale(0.7920,0.8);">Jone</div>
<div class="t" style="left:153.80px;top:382.70px;font-size:8.8px;line-height:8.8px;transform:scale(0.7920,0.8);">Praistd</div>
<div class="t" style="left:211.00px;top:382.70px;font-size:8.8px;line-height:8.8px;transform:scale(0.8070,0.8);">13.05.1950</div>
<div class="t" style="left:264.60px;top:382.70px;font-size:8.8px;line-height:8.8px;transform:scale(0.8070,0.8);">17.06.2022</div>
<div class="t" style="left:304.90px;top:382.70px;font-size:8.8px;line-height:8.8px;transform:scale(0.8070,0.8);">11.07.2022</div>
<div class="t" style="left:344.80px;top:382.70px;font-size:8.8px;line-height:8.8px;transform:scale(0.8070,0.8);">08.01.2024</div>
<div class="t" style="left:405.70px;top:382.70px;font-size:8.8px;line-height:8.8px;transform:scale(0.8070,0.8);">12.07.2023</div>
<div class="t" style="left:479.46px;top:382.70px;font-size:8.8px;line-height:8.8px;transform:scale(0.8070,0.8);">08.01.2024</div>
<div class="t" style="left:539.50px;top:382.70px;font-size:8.8px;line-height:8.8px;transform:scale(0.8070,0.8);color:#dde6f1;">10</div>
<div class="t" style="left:673.65px;top:382.70px;font-size:8.8px;line-height:8.8px;transform:scale(0.8070,0.8);color:#dde6f1;">1</div>
<div class="t" style="left:744.80px;top:382.70px;font-size:8.8px;line-height:8.8px;transform:scale(0.7920,0.8);">AOK Niedersachsen</div>
<div class="t" style="left:940.98px;top:382.70px;font-size:8.8px;line-height:8.8px;transform:scale(0.8070,0.8);">102114010</div>
<div class="t" style="left:980.45px;top:382.70px;font-size:8.8px;line-height:8.8px;transform:scale(0.8070,0.8);">441612217</div>
<div class="a" style="left:522.60px;top:391.65px;width:26.40px;height:10.30px;background:#2e6aa5;"></div>
<div class="a" style="left:593.60px;top:391.65px;width:86.40px;height:10.30px;background:#2e6aa5;"></div>
<div class="a" style="left:476.00px;top:391.65px;width:47.00px;height:10.30px;background:#2e6aa5;"></div>
<div class="t" style="left:19.20px;top:393.00px;font-size:8.8px;line-height:8.8px;transform:scaleX(0.8070);">2586</div>
<div class="t" style="left:40.13px;top:393.00px;font-size:8.8px;line-height:8.8px;transform:scaleX(0.8070);">1102</div>
<div class="t" style="left:69.05px;top:393.00px;font-size:8.8px;line-height:8.8px;transform:scaleX(0.8070);">3</div>
<div class="t" style="left:81.55px;top:393.00px;font-size:8.8px;line-height:8.8px;transform:scaleX(0.8070);">995</div>
<div class="t" style="left:96.60px;top:393.00px;font-size:8.8px;line-height:8.8px;transform:scaleX(0.7920);">Lise</div>
<div class="t" style="left:153.80px;top:393.00px;font-size:8.8px;line-height:8.8px;transform:scaleX(0.7920);">Cemkahr</div>
<div class="t" style="left:211.00px;top:393.00px;font-size:8.8px;line-height:8.8px;transform:scaleX(0.8070);">06.05.1981</div>
<div class="t" style="left:264.60px;top:393.00px;font-size:8.8px;line-height:8.8px;transform:scaleX(0.8070);">17.05.2022</div>
<div class="t" style="left:304.90px;top:393.00px;font-size:8.8px;line-height:8.8px;transform:scaleX(0.8070);">12.07.2022</div>
<div class="t" style="left:344.80px;top:393.00px;font-size:8.8px;line-height:8.8px;transform:scaleX(0.8070);">03.02.2024</div>
<div class="t" style="left:405.70px;top:393.00px;font-size:8.8px;line-height:8.8px;transform:scaleX(0.8070);">24.01.2023</div>
<div class="t" style="left:479.98px;top:393.00px;font-size:8.8px;line-height:8.8px;transform:scaleX(0.8070);color:#dde6f1;">11.07.2023</div>
<div class="t" style="left:539.50px;top:393.00px;font-size:8.8px;line-height:8.8px;transform:scaleX(0.8070);color:#dde6f1;">14</div>
<div class="t" style="left:673.65px;top:393.00px;font-size:8.8px;line-height:8.8px;transform:scaleX(0.8070);color:#dde6f1;">1</div>
<div class="t" style="left:744.80px;top:393.00px;font-size:8.8px;line-height:8.8px;transform:scaleX(0.7920);">AOK Plus Thüringen</div>
<div class="t" style="left:940.45px;top:393.00px;font-size:8.8px;line-height:8.8px;transform:scaleX(0.8070);">105998018</div>
<div class="t" style="left:980.45px;top:393.00px;font-size:8.8px;line-height:8.8px;transform:scaleX(0.8070);">441612217</div>
<div class="a" style="left:522.60px;top:401.94px;width:26.40px;height:10.30px;background:#2e6aa5;"></div>
<div class="a" style="left:593.60px;top:401.94px;width:86.40px;height:10.30px;background:#2e6aa5;"></div>
<div class="t" style="left:19.20px;top:403.29px;font-size:8.8px;line-height:8.8px;transform:scaleX(0.8070);">2589</div>
<div class="t" style="left:39.60px;top:403.29px;font-size:8.8px;line-height:8.8px;transform:scaleX(0.8070);">2546</div>
<div class="t" style="left:69.05px;top:403.29px;font-size:8.8px;line-height:8.8px;transform:scaleX(0.8070);">1</div>
<div class="t" style="left:77.60px;top:403.29px;font-size:8.8px;line-height:8.8px;transform:scaleX(0.8070);">2082</div>
<div class="t" style="left:96.60px;top:403.29px;font-size:8.8px;line-height:8.8px;transform:scaleX(0.7920);">Wlenp</div>
<div class="t" style="left:153.80px;top:403.29px;font-size:8.8px;line-height:8.8px;transform:scaleX(0.7920);">Pateale</div>
<div class="t" style="left:211.00px;top:403.29px;font-size:8.8px;line-height:8.8px;transform:scaleX(0.8070);">22.08.1980</div>
<div class="t" style="left:264.60px;top:403.29px;font-size:8.8px;line-height:8.8px;transform:scaleX(0.8070);">28.07.2022</div>
<div class="t" style="left:304.90px;top:403.29px;font-size:8.8px;line-height:8.8px;transform:scaleX(0.8070);">03.08.2022</div>
<div class="t" style="left:344.80px;top:403.29px;font-size:8.8px;line-height:8.8px;transform:scaleX(0.8070);">01.02.2024</div>
<div class="t" style="left:405.70px;top:403.29px;font-size:8.8px;line-height:8.8px;transform:scaleX(0.8070);">22.09.2023</div>
<div class="t" style="left:539.50px;top:403.29px;font-size:8.8px;line-height:8.8px;transform:scaleX(0.8070);color:#dde6f1;">24</div>
<div class="t" style="left:673.65px;top:403.29px;font-size:8.8px;line-height:8.8px;transform:scaleX(0.8070);color:#dde6f1;">1</div>
<div class="t" style="left:744.80px;top:403.29px;font-size:8.8px;line-height:8.8px;transform:scaleX(0.7920);">TECHNIKER KRANKENKASSE</div>
<div class="t" style="left:940.45px;top:403.29px;font-size:8.8px;line-height:8.8px;transform:scaleX(0.8070);">105575519</div>
<div class="t" style="left:981.51px;top:403.29px;font-size:8.8px;line-height:8.8px;transform:scaleX(0.8070);">441112212</div>
</div>
<div class="t" style="left:101.70px;top:719.90px;font-size:8.2px;line-height:8.2px;transform:scaleX(0.8262);color:#111;">DRUCKEN</div>
<div class="t" style="left:137.50px;top:719.90px;font-size:8.2px;line-height:8.2px;transform:scaleX(0.8400);color:#111;">EXPORT</div>
<div class="t" style="left:175.00px;top:719.90px;font-size:8.2px;line-height:8.2px;transform:scaleX(0.8198);color:#111;">TEILN.LISTE</div>
<div class="t" style="left:220.40px;top:719.90px;font-size:8.2px;line-height:8.2px;transform:scaleX(0.8351);color:#111;">ABRECHNEN</div>
<div class="t" style="left:601.20px;top:719.90px;font-size:8.2px;line-height:8.2px;transform:scaleX(0.8220);color:#111;">AUFTRÄGE</div>
<div class="t" style="left:883.40px;top:719.90px;font-size:8.2px;line-height:8.2px;transform:scaleX(0.8476);color:#111;">DB REFRESH</div>
<div class="t" style="left:937.10px;top:719.90px;font-size:8.2px;line-height:8.2px;transform:scaleX(0.8714);color:#111;">STATUS REZEPT</div>
<div class="t" style="left:1003.70px;top:719.90px;font-size:8.2px;line-height:8.2px;transform:scaleX(0.8606);color:#111;">PATIENT-BEARB.</div>
<div class="t" style="left:1067.50px;top:719.90px;font-size:8.2px;line-height:8.2px;transform:scaleX(0.8457);color:#111;">FALL BEARB.</div>
<div class="t" style="left:1121.70px;top:719.90px;font-size:8.2px;line-height:8.2px;transform:scaleX(0.8356);color:#111;">OK</div>
<div class="a" style="left:1121.70px;top:727.20px;width:5.80px;height:0.80px;background:#333;"></div>
<div class="a" style="left:99.00px;top:736.80px;width:1042.00px;height:10.90px;background:#f0f0f0;"></div>
<div class="a" style="left:99.00px;top:736.50px;width:1042.00px;height:0.70px;background:#dcdcdc;"></div>
<div class="t" style="left:101.70px;top:738.80px;font-size:8.4px;line-height:8.4px;transform:scaleX(0.8300);font-weight:bold;">Status</div>
<div class="a" style="left:473.40px;top:737.50px;width:60.10px;height:9.50px;box-shadow:inset 0 0 0 1px #c8c8c8;"></div>
<div class="a" style="left:536.20px;top:737.50px;width:60.60px;height:9.50px;box-shadow:inset 0 0 0 1px #c8c8c8;"></div>
<div class="t" style="left:476.80px;top:738.60px;font-size:8.8px;line-height:8.8px;transform:scaleX(0.9354);color:#222;font-weight:bold;">27.07.2023</div>
<div class="t" style="left:540.00px;top:738.60px;font-size:8.8px;line-height:8.8px;transform:scaleX(0.9019);color:#222;font-weight:bold;">15:45</div>
<svg class="a" style="left:1133px;top:740px" width="8" height="8" viewBox="0 0 8 8"><path d="M7.5 0.5 L0.5 7.5" stroke="#888" stroke-width="0.9" stroke-dasharray="1 1"/><path d="M7.5 3.5 L3.5 7.5" stroke="#888" stroke-width="0.9" stroke-dasharray="1 1"/></svg>
<div class="a" style="left:86.00px;top:100.30px;width:157.20px;height:166.30px;border:6px solid #ec7203;box-sizing:border-box;"></div>
<div class="a" style="left:351.00px;top:197.80px;width:113.40px;height:88.60px;border:6px solid #ec7203;box-sizing:border-box;"></div>
<div class="a" style="left:107.50px;top:289.20px;width:1011.50px;height:20.80px;border:6px solid #ec7203;box-sizing:border-box;"></div>
<div class="a" style="left:68.9px;top:84.8px;width:38.4px;height:38.4px;border-radius:50%;background:#ec7203;"></div>
<svg class="a" style="left:73.10px;top:92.90px;overflow:visible" width="32" height="24" viewBox="-1 -1 32 24"><path d="M0 2.4 L4.4 0 H9.5 V20.2 H4.6 V4.7 L1 6 Z" fill="#fff"/><path transform="translate(13.8 0)" d="M0.2 2.6 C1.5 0.9 3.8 0 6.9 0 C11.2 0 14 2.4 14 5.8 C14 8 13 9.6 11.2 11.5 L6.9 16.3 H14.2 V20.2 H0 V16.4 L7.8 8 C8.7 7 9.1 6.4 9.1 5.6 C9.1 4.1 8 3.3 6.6 3.3 C4.5 3.3 3 4 1.9 5.2 Z" fill="#fff"/></svg>
<div class="a" style="left:334.0px;top:181.3px;width:38.4px;height:38.4px;border-radius:50%;background:#ec7203;"></div>
<svg class="a" style="left:339.30px;top:190.80px;overflow:visible" width="32" height="24" viewBox="-1 -1 32 24"><path d="M0 2.4 L4.4 0 H9.5 V20.2 H4.6 V4.7 L1 6 Z" fill="#fff"/><path transform="translate(14.7 0)" d="M0 2.4 L4.4 0 H9.5 V20.2 H4.6 V4.7 L1 6 Z" fill="#fff"/></svg>
<div class="a" style="left:75.3px;top:279.0px;width:38.4px;height:38.4px;border-radius:50%;background:#ec7203;"></div>
<svg class="a" style="left:79.30px;top:288.00px;overflow:visible" width="32" height="24" viewBox="-1 -1 32 24"><path d="M0 2.4 L4.4 0 H9.5 V20.2 H4.6 V4.7 L1 6 Z" fill="#fff"/><path transform="translate(13.8 0)" d="M0.8 1.4 C2.2 0.5 3.8 0.1 6 0.1 C10.5 0.1 13.9 2 13.9 5.2 C13.9 7.3 12.6 8.8 10.5 9.4 C12.8 10 14.2 11.6 14.2 14 C14.2 17.6 11 19.9 6.5 19.9 C3.8 19.9 1.7 19.3 0 18.3 L0.9 15 C2.4 15.7 4 16.2 5.9 16.2 C7.9 16.2 9.2 15.3 9.2 13.8 C9.2 12.3 7.9 11.5 5.8 11.5 H3.4 V8.5 H5.8 C7.7 8.5 8.9 7.6 8.9 6.2 C8.9 4.8 7.8 4 6 4 C4.5 4 3.2 4.4 2 4.9 Z" fill="#fff"/></svg>
</body></html>
